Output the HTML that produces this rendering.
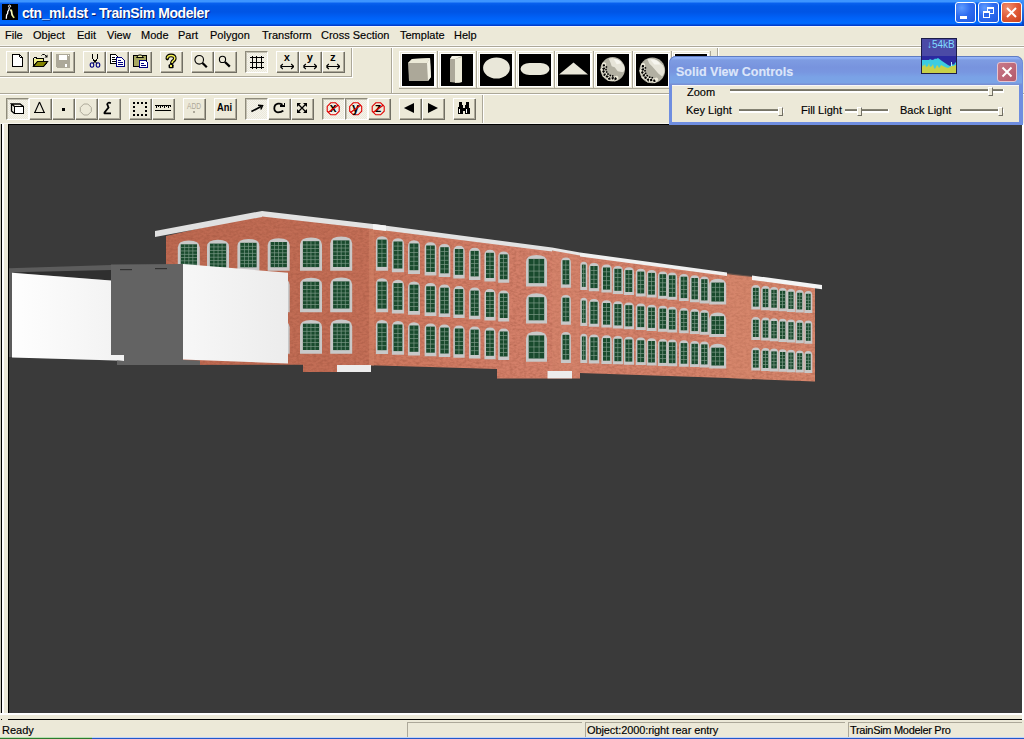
<!DOCTYPE html><html><head><meta charset="utf-8"><style>
*{margin:0;padding:0;box-sizing:border-box}
html,body{width:1024px;height:739px;overflow:hidden;background:#ece9d8;font-family:"Liberation Sans",sans-serif;font-size:11px;color:#000}
.a{position:absolute}
.t{position:absolute;white-space:pre;line-height:12px;-webkit-text-stroke-width:0.15px}
.btn{position:absolute;width:22px;height:21px;border-top:1px solid #fff;border-left:1px solid #fff;box-shadow:inset -1px -1px 0 #aca899, 1px 1px 0 #716f64;}
.btn svg{position:absolute;left:3px;top:2px}
.prs{position:absolute;width:23px;height:22px;border-top:1px solid #8e8b7c;border-left:1px solid #8e8b7c;box-shadow:inset 1px 1px 0 #c4c1b2;border-right:1px solid #fff;border-bottom:1px solid #fff;
 background-color:#f4f3ee;background-image:linear-gradient(45deg,#ece9d8 25%,transparent 25%,transparent 75%,#ece9d8 75%),linear-gradient(45deg,#ece9d8 25%,transparent 25%,transparent 75%,#ece9d8 75%);background-size:2px 2px;background-position:0 0,1px 1px}
.prs svg{position:absolute;left:3px;top:2px}
</style></head><body>
<div class="a" style="left:0;top:0;width:1024px;height:26px;background:linear-gradient(180deg,#3d95ff 0px,#3d95ff 2px,#0a62ef 3px,#0058e6 6px,#0055e5 12px,#0062f8 18px,#006bff 23px,#0066f5 24px,#003fcf 25px,#003dcb 26px)"></div>
<div class="a" style="left:2px;top:4px;width:16px;height:16px;background:#000"><svg width="16" height="16" style="position:absolute;left:0;top:0"><path d="M4.3 14.8 L4.6 11 L5.6 9.5 L5.8 7.5 L6.8 6 L7.3 3.6" stroke="#fff" stroke-width="1.3" fill="none"/><circle cx="7.6" cy="2.2" r="1.1" stroke="#fff" stroke-width="0.9" fill="none"/><path d="M8.6 5.5 L9.6 7 L10 10 L11 12.5 L12.3 13.8" stroke="#eeee88" stroke-width="1.6" fill="none"/><path d="M8.4 5.6 L9.3 8.5 L10.2 12" stroke="#fff" stroke-width="0.7" fill="none"/></svg></div>
<div class="t" style="left:23px;top:7px;font-weight:bold;font-size:14px;line-height:14px;letter-spacing:-0.42px;color:#0a1e6e;-webkit-text-stroke-width:0">ctn_ml.dst - TrainSim Modeler</div>
<div class="t" style="left:22px;top:6px;font-weight:bold;font-size:14px;line-height:14px;letter-spacing:-0.42px;color:#fff;-webkit-text-stroke-width:0">ctn_ml.dst - TrainSim Modeler</div>
<div class="a" style="left:955px;top:2px;width:21px;height:21px;border:1px solid #fff;border-radius:3px;background:radial-gradient(circle at 30% 25%,#5f9cff 0%,#2e6cf0 45%,#1f58e0 100%)"><div class="a" style="left:4px;top:13px;width:7px;height:3px;background:#fff"></div></div>
<div class="a" style="left:978px;top:2px;width:21px;height:21px;border:1px solid #fff;border-radius:3px;background:radial-gradient(circle at 30% 25%,#5f9cff 0%,#2e6cf0 45%,#1f58e0 100%)"><div class="a" style="left:8px;top:4px;width:7px;height:7px;border:1px solid #fff;border-top-width:2px"></div><div class="a" style="left:4px;top:8px;width:7px;height:7px;border:1px solid #fff;border-top-width:2px;background:#2a66ea"></div></div>
<div class="a" style="left:1001px;top:2px;width:21px;height:21px;border:1px solid #fff;border-radius:3px;background:radial-gradient(circle at 30% 25%,#f09070 0%,#e05a36 50%,#c8401c 100%)"><svg width="19" height="19" style="position:absolute;left:0;top:0"><path d="M5 5 L14 14 M14 5 L5 14" stroke="#fff" stroke-width="2"/></svg></div>
<div class="a" style="left:1022px;top:0;width:2px;height:26px;background:linear-gradient(180deg,#3d95ff,#0040c0)"></div>
<div class="a" style="left:0;top:26px;width:1024px;height:1px;background:#f4f6fb"></div>
<div class="t" style="left:5px;top:29px">File</div>
<div class="t" style="left:33px;top:29px">Object</div>
<div class="t" style="left:77px;top:29px">Edit</div>
<div class="t" style="left:107px;top:29px">View</div>
<div class="t" style="left:141px;top:29px">Mode</div>
<div class="t" style="left:178px;top:29px">Part</div>
<div class="t" style="left:210px;top:29px">Polygon</div>
<div class="t" style="left:262px;top:29px">Transform</div>
<div class="t" style="left:321px;top:29px">Cross Section</div>
<div class="t" style="left:400px;top:29px">Template</div>
<div class="t" style="left:454px;top:29px">Help</div>
<div class="a" style="left:0;top:45px;width:1024px;height:1px;background:#f7f6f0"></div>
<div class="a" style="left:0;top:46px;width:1024px;height:1px;background:#aca899"></div>
<div class="a" style="left:0;top:47px;width:1024px;height:1px;background:#fff"></div>
<div class="btn" style="left:6px;top:51px;width:22px;height:21px"><svg width="16" height="16" shape-rendering="crispEdges" style="overflow:visible"><path d="M2.5 0.5h7l3 3v9h-10z" fill="#fff" stroke="#000"/><rect x="9" y="1" width="1" height="2" fill="#000"/><rect x="10" y="3" width="2" height="1" fill="#000"/></svg></div>
<div class="btn" style="left:29px;top:51px;width:22px;height:21px"><svg width="16" height="16" shape-rendering="crispEdges" style="overflow:visible"><path d="M0.5 3.5h3v1h7v3" fill="none" stroke="#000"/><rect x="1" y="5" width="9" height="2" fill="#f0f088"/><rect x="1" y="7" width="4" height="4" fill="#f0f088"/><path d="M0.5 4v8.5h10l4-5h-10l-4 5" fill="none" stroke="#000"/><path d="M4.5 8h9.5l-3.5 4h-9.5z" fill="#848400"/><path d="M4.5 7.5h10l-4 5h-10z" fill="none" stroke="#000" shape-rendering="auto" stroke-width="1.2"/><path d="M8.5 1.5l1-1h2l1.5 1.5" fill="none" stroke="#000" shape-rendering="auto"/><path d="M11.5 3.5h3v-3z" fill="#000" shape-rendering="auto"/></svg></div>
<div class="btn" style="left:52px;top:51px;width:22px;height:21px"><svg width="16" height="16" shape-rendering="crispEdges" style="overflow:visible"><rect x="0" y="0" width="14" height="14" fill="#aca899"/><rect x="0" y="13" width="1" height="1" fill="#ece9d8"/><rect x="3" y="1" width="8" height="5" fill="#fff"/><rect x="12" y="1" width="1" height="1" fill="#fff"/><rect x="9" y="10" width="2" height="3" fill="#fff"/></svg></div>
<div class="btn" style="left:83px;top:51px;width:22px;height:21px"><svg width="16" height="16" shape-rendering="crispEdges" style="overflow:visible"><path d="M5.5 0v4l2.5 4l2.5-4v-4" fill="none" stroke="#000" stroke-width="1.1"/><path d="M8 7l-2 3M8 7l2 3" stroke="#000" stroke-width="1.1" shape-rendering="auto"/><ellipse cx="5" cy="11" rx="1.8" ry="2.2" fill="none" stroke="#000080" stroke-width="1.1" shape-rendering="auto"/><ellipse cx="11" cy="11" rx="1.8" ry="2.2" fill="none" stroke="#000080" stroke-width="1.1" shape-rendering="auto"/></svg></div>
<div class="btn" style="left:106px;top:51px;width:22px;height:21px"><svg width="16" height="16" shape-rendering="crispEdges" style="overflow:visible"><path d="M0.5 0.5h5l1.5 1.5v7.5h-6.5z" fill="#fff" stroke="#000"/><rect x="2" y="3" width="3" height="1" fill="#000"/><rect x="2" y="5" width="4" height="1" fill="#000"/><rect x="2" y="7" width="4" height="1" fill="#000"/><path d="M6.5 3.5h5l2.5 2.5v6.5h-7.5z" fill="#fff" stroke="#000080"/><rect x="8" y="6" width="3" height="1" fill="#000080"/><rect x="8" y="8" width="5" height="1" fill="#000080"/><rect x="8" y="10" width="5" height="1" fill="#000080"/></svg></div>
<div class="btn" style="left:129px;top:51px;width:22px;height:21px"><svg width="16" height="16" shape-rendering="crispEdges" style="overflow:visible"><rect x="0.5" y="1.5" width="13" height="11" fill="#a8a860" stroke="#000"/><path d="M3.5 3.5l2-2.5h3l2 2.5z" fill="#f0f0a0" stroke="#000" shape-rendering="auto"/><rect x="4" y="3" width="6" height="1" fill="#000"/><path d="M6.5 6.5h6l2 2v5h-8z" fill="#fff" stroke="#000080"/><rect x="8" y="9" width="3" height="1" fill="#000080"/><rect x="8" y="11" width="5" height="1" fill="#000080"/></svg></div>
<div class="btn" style="left:160px;top:51px;width:22px;height:21px"><svg width="16" height="16" shape-rendering="crispEdges" style="overflow:visible"><path d="M3.3 4.6 Q3.3 1.4 7 1.4 Q10.8 1.4 10.8 4.3 Q10.8 6.4 8.6 7.4 L7.8 9" fill="none" stroke="#000" stroke-width="3.6" stroke-linecap="round" shape-rendering="auto"/><rect x="4.6" y="10.2" width="5" height="4" rx="1" fill="#000" shape-rendering="auto"/><path d="M3.3 4.6 Q3.3 1.4 7 1.4 Q10.8 1.4 10.8 4.3 Q10.8 6.4 8.6 7.4 L7.8 9" fill="none" stroke="#f4f050" stroke-width="1.5" shape-rendering="auto"/><rect x="6" y="11.3" width="2.2" height="1.8" fill="#f4f050"/></svg></div>
<div class="btn" style="left:191px;top:51px;width:22px;height:21px"><svg width="16" height="16" shape-rendering="crispEdges" style="overflow:visible"><circle cx="4.2" cy="5.8" r="4.3" fill="none" stroke="#000" stroke-width="1.1" shape-rendering="auto"/><path d="M7.5 9 L11.8 13.2" stroke="#000" stroke-width="2.3" shape-rendering="auto"/></svg></div>
<div class="btn" style="left:214px;top:51px;width:22px;height:21px"><svg width="16" height="16" shape-rendering="crispEdges" style="overflow:visible"><circle cx="4.5" cy="5.4" r="3.1" fill="none" stroke="#000" stroke-width="1.1" shape-rendering="auto"/><path d="M7 8 L11.8 12.6" stroke="#000" stroke-width="2.3" shape-rendering="auto"/></svg></div>
<div class="prs" style="left:245px;top:51px;width:23px;height:22px"><svg width="16" height="16" shape-rendering="crispEdges" style="overflow:visible"><rect x="2.5" y="2" width="1.4" height="13" fill="#000"/><rect x="7" y="2" width="1.4" height="13" fill="#000"/><rect x="11.5" y="2" width="1.4" height="13" fill="#000"/><rect x="1" y="3" width="14" height="1.4" fill="#000"/><rect x="1" y="8" width="14" height="1.4" fill="#000"/><rect x="1" y="12.5" width="14" height="1.4" fill="#000"/></svg></div>
<div class="btn" style="left:276px;top:51px;width:22px;height:21px"><svg width="16" height="16" shape-rendering="crispEdges" style="overflow:visible"><text x="6.8" y="7" text-anchor="middle" font-family="Liberation Mono" font-weight="bold" font-size="10.5" fill="#000">x</text><path d="M0.5 12.5h13" stroke="#000" stroke-width="1.1"/><path d="M0.3 12.5l2.5-2.5M0.3 12.5l2.5 2.5M13.7 12.5l-2.5-2.5M13.7 12.5l-2.5 2.5" stroke="#000" stroke-width="1.1" shape-rendering="auto"/></svg></div>
<div class="btn" style="left:299px;top:51px;width:22px;height:21px"><svg width="16" height="16" shape-rendering="crispEdges" style="overflow:visible"><text x="6.8" y="7" text-anchor="middle" font-family="Liberation Mono" font-weight="bold" font-size="10.5" fill="#000">y</text><path d="M0.5 12.5h13" stroke="#000" stroke-width="1.1"/><path d="M0.3 12.5l2.5-2.5M0.3 12.5l2.5 2.5M13.7 12.5l-2.5-2.5M13.7 12.5l-2.5 2.5" stroke="#000" stroke-width="1.1" shape-rendering="auto"/></svg></div>
<div class="btn" style="left:322px;top:51px;width:22px;height:21px"><svg width="16" height="16" shape-rendering="crispEdges" style="overflow:visible"><text x="6.8" y="7" text-anchor="middle" font-family="Liberation Mono" font-weight="bold" font-size="10.5" fill="#000">z</text><path d="M0.5 12.5h13" stroke="#000" stroke-width="1.1"/><path d="M0.3 12.5l2.5-2.5M0.3 12.5l2.5 2.5M13.7 12.5l-2.5-2.5M13.7 12.5l-2.5 2.5" stroke="#000" stroke-width="1.1" shape-rendering="auto"/></svg></div>
<div class="a" style="left:351px;top:48px;width:1px;height:29px;background:#aca899"></div><div class="a" style="left:352px;top:48px;width:1px;height:30px;background:#fff"></div>
<div class="a" style="left:0;top:76px;width:352px;height:1px;background:#aca899"></div><div class="a" style="left:0;top:77px;width:352px;height:1px;background:#fff"></div>
<div class="a" style="left:391px;top:48px;width:1px;height:45px;background:#aca899"></div><div class="a" style="left:392px;top:48px;width:1px;height:45px;background:#fff"></div>
<div class="a" style="left:399px;top:51px;width:39px;height:38px;background:#fff;box-shadow:inset -1px -1px 0 #aca899, inset -2px -2px 0 #ece9d8"><div class="a" style="left:1px;top:1px;width:36px;height:35px;border:1px solid #ece9d8;border-right:none;border-bottom:none"></div><svg class="a" style="left:3px;top:3px" width="32" height="32"><rect width="32" height="32" fill="#000"/><path d="M6 9 L10 5 L28 4 L29 23 L26 27 L7 27 Z" fill="#aca899"/><path d="M6 9 L10 5 L28 4 L25 9 Z" fill="#ecead8"/><path d="M25 9 L28 4 L29 23 L26 27 Z" fill="#f4f2e4"/></svg></div>
<div class="a" style="left:438px;top:51px;width:39px;height:38px;background:#fff;box-shadow:inset -1px -1px 0 #aca899, inset -2px -2px 0 #ece9d8"><div class="a" style="left:1px;top:1px;width:36px;height:35px;border:1px solid #ece9d8;border-right:none;border-bottom:none"></div><svg class="a" style="left:3px;top:3px" width="32" height="32"><rect width="32" height="32" fill="#000"/><path d="M9 5 L11 2 L21 2 L21 28 L18 29 L9 28 Z" fill="#aca899"/><path d="M14 5 L21 3 L21 28 L14 29 Z" fill="#ecead8"/><path d="M9 5 L11 2 L21 2 L14 5Z" fill="#f4f2e4"/></svg></div>
<div class="a" style="left:477px;top:51px;width:39px;height:38px;background:#fff;box-shadow:inset -1px -1px 0 #aca899, inset -2px -2px 0 #ece9d8"><div class="a" style="left:1px;top:1px;width:36px;height:35px;border:1px solid #ece9d8;border-right:none;border-bottom:none"></div><svg class="a" style="left:3px;top:3px" width="32" height="32"><rect width="32" height="32" fill="#000"/><ellipse cx="16.5" cy="14" rx="13.4" ry="10.5" fill="#e9e7d9"/></svg></div>
<div class="a" style="left:516px;top:51px;width:39px;height:38px;background:#fff;box-shadow:inset -1px -1px 0 #aca899, inset -2px -2px 0 #ece9d8"><div class="a" style="left:1px;top:1px;width:36px;height:35px;border:1px solid #ece9d8;border-right:none;border-bottom:none"></div><svg class="a" style="left:3px;top:3px" width="32" height="32"><rect width="32" height="32" fill="#000"/><rect x="1.5" y="9" width="29" height="12" rx="9" ry="6" fill="#e9e7d9"/></svg></div>
<div class="a" style="left:555px;top:51px;width:39px;height:38px;background:#fff;box-shadow:inset -1px -1px 0 #aca899, inset -2px -2px 0 #ece9d8"><div class="a" style="left:1px;top:1px;width:36px;height:35px;border:1px solid #ece9d8;border-right:none;border-bottom:none"></div><svg class="a" style="left:3px;top:3px" width="32" height="32"><rect width="32" height="32" fill="#000"/><path d="M1 20.5 L15.5 8.5 L30 20.5 Z" fill="#e9e7d9"/></svg></div>
<div class="a" style="left:594px;top:51px;width:39px;height:38px;background:#fff;box-shadow:inset -1px -1px 0 #aca899, inset -2px -2px 0 #ece9d8"><div class="a" style="left:1px;top:1px;width:36px;height:35px;border:1px solid #ece9d8;border-right:none;border-bottom:none"></div><svg class="a" style="left:3px;top:3px" width="32" height="32"><rect width="32" height="32" fill="#000"/><circle cx="15.7" cy="15.3" r="12.2" fill="#b2b0a2"/><path d="M11.7 4.600000000000001 Q19.7 2.1000000000000014 26.9 11.3 Q28.9 16.3 25.9 18.3 L20.7 17.3 L17.7 13.3 L14.7 12.3 L13.7 9.3 Z" fill="#e6e4d8"/><path d="M16.7 5.100000000000001 Q22.7 5.100000000000001 24.7 9.3 L19.7 10.3Z" fill="#f6f5ee"/><path d="M7.0 10.3 L6.8 12.2 L7.0 14.1 L5.7 15.8 L6.6 17.6 L7.7 19.0 L7.6 21.2 L9.3 22.2 L11.0 22.8 L12.1 24.6 L14.1 24.6 L15.9 24.1 L17.8 25.1 L19.4 24.0" fill="none" stroke="#ece9d8" stroke-width="4.2" stroke-linecap="round"/><path d="M7.0 10.3 L6.8 12.2 L7.0 14.1 L5.7 15.8 L6.6 17.6 L7.7 19.0 L7.6 21.2 L9.3 22.2 L11.0 22.8 L12.1 24.6 L14.1 24.6 L15.9 24.1 L17.8 25.1 L19.4 24.0" fill="none" stroke="#000" stroke-width="2.2" stroke-dasharray="2.2 1.2"/><rect x="8.6" y="12.2" width="1.6" height="1.6" fill="#000"/><rect x="8.2" y="14.7" width="1.6" height="1.6" fill="#000"/><rect x="8.8" y="17.2" width="1.6" height="1.6" fill="#000"/><rect x="10.2" y="19.3" width="1.6" height="1.6" fill="#000"/><rect x="12.4" y="20.7" width="1.6" height="1.6" fill="#000"/><rect x="14.9" y="21.2" width="1.6" height="1.6" fill="#000"/></svg></div>
<div class="a" style="left:633px;top:51px;width:39px;height:38px;background:#fff;box-shadow:inset -1px -1px 0 #aca899, inset -2px -2px 0 #ece9d8"><div class="a" style="left:1px;top:1px;width:36px;height:35px;border:1px solid #ece9d8;border-right:none;border-bottom:none"></div><svg class="a" style="left:3px;top:3px" width="32" height="32"><rect width="32" height="32" fill="#000"/><circle cx="16.3" cy="16.4" r="12.8" fill="#b2b0a2"/><path d="M11.3 5.099999999999998 Q19.3 2.599999999999998 27.1 11.399999999999999 Q30.1 18.4 26.1 22.4 L22.3 19.4 L16.3 12.399999999999999 L13.3 9.399999999999999 Z" fill="#e6e4d8"/><path d="M14.3 5.599999999999998 Q21.3 4.599999999999998 24.3 10.399999999999999 L18.3 10.399999999999999Z" fill="#f6f5ee"/><path d="M7.1 11.1 L6.8 13.1 L7.0 15.1 L5.7 17.0 L6.6 18.8 L7.8 20.4 L7.7 22.6 L9.5 23.7 L11.3 24.4 L12.5 26.3 L14.6 26.2 L16.5 25.8 L18.5 26.8 L20.2 25.6" fill="none" stroke="#ece9d8" stroke-width="4.2" stroke-linecap="round"/><path d="M7.1 11.1 L6.8 13.1 L7.0 15.1 L5.7 17.0 L6.6 18.8 L7.8 20.4 L7.7 22.6 L9.5 23.7 L11.3 24.4 L12.5 26.3 L14.6 26.2 L16.5 25.8 L18.5 26.8 L20.2 25.6" fill="none" stroke="#000" stroke-width="2.2" stroke-dasharray="2.2 1.2"/><rect x="8.6" y="13.1" width="1.6" height="1.6" fill="#000"/><rect x="8.2" y="15.9" width="1.6" height="1.6" fill="#000"/><rect x="8.8" y="18.6" width="1.6" height="1.6" fill="#000"/><rect x="10.4" y="20.9" width="1.6" height="1.6" fill="#000"/><rect x="12.8" y="22.4" width="1.6" height="1.6" fill="#000"/><rect x="15.5" y="22.9" width="1.6" height="1.6" fill="#000"/></svg></div>
<div class="a" style="left:672px;top:51px;width:39px;height:38px;background:#fff;box-shadow:inset -1px -1px 0 #aca899, inset -2px -2px 0 #ece9d8"><div class="a" style="left:1px;top:1px;width:36px;height:35px;border:1px solid #ece9d8;border-right:none;border-bottom:none"></div><svg class="a" style="left:3px;top:3px" width="32" height="32"><rect width="32" height="32" fill="#000"/></svg></div>
<div class="a" style="left:717px;top:48px;width:1px;height:45px;background:#aca899"></div><div class="a" style="left:718px;top:48px;width:1px;height:45px;background:#fff"></div>
<div class="a" style="left:0;top:93px;width:1024px;height:1px;background:#aca899"></div><div class="a" style="left:0;top:94px;width:1024px;height:1px;background:#fff"></div>
<div class="prs" style="left:6px;top:98px;width:23px;height:22px"><svg width="16" height="16" shape-rendering="crispEdges" style="overflow:visible"><g transform="translate(0,1)"><rect x="4.5" y="4.5" width="9" height="7" fill="#fff" stroke="#000" stroke-width="1.3"/><path d="M4.5 4.5 L1.5 2 H10 L13.5 4.5 M1.5 2 V9 L4.5 11.5" fill="none" stroke="#000" stroke-width="1.3" shape-rendering="auto"/></g></svg></div>
<div class="btn" style="left:29px;top:98px;width:22px;height:21px"><svg width="16" height="16" shape-rendering="crispEdges" style="overflow:visible"><path d="M6.5 1 L1.8 11.5 M6.5 1 L11.2 11.5" fill="none" stroke="#000" stroke-width="1.1" shape-rendering="auto"/><rect x="1" y="11" width="11" height="1" fill="#000"/></svg></div>
<div class="btn" style="left:52px;top:98px;width:22px;height:21px"><svg width="16" height="16" shape-rendering="crispEdges" style="overflow:visible"><rect x="6" y="7" width="3" height="3" fill="#000"/></svg></div>
<div class="btn" style="left:75px;top:98px;width:22px;height:21px"><svg width="16" height="16" shape-rendering="crispEdges" style="overflow:visible"><path d="M4.5 2.5h4l3.5 3.5v4l-3.5 3.5h-4l-3.5-3.5v-4z" transform="translate(0.3,0.5)" fill="none" stroke="#aca899" shape-rendering="auto"/></svg></div>
<div class="btn" style="left:98px;top:98px;width:22px;height:21px"><svg width="16" height="16" shape-rendering="crispEdges" style="overflow:visible"><path d="M8.8 2.2 Q6 0.8 5.2 3.2 L6.5 6.5 L2.5 11.5 Q2 12.6 3.5 12.4 H9" fill="none" stroke="#000" stroke-width="1.8" shape-rendering="auto"/></svg></div>
<div class="btn" style="left:129px;top:98px;width:22px;height:21px"><svg width="16" height="16" shape-rendering="crispEdges" style="overflow:visible"><rect x="0" y="1" width="2" height="2" fill="#000"/><rect x="4" y="1" width="2" height="2" fill="#000"/><rect x="8" y="1" width="2" height="2" fill="#000"/><rect x="12" y="1" width="2" height="2" fill="#000"/><rect x="0" y="5" width="2" height="2" fill="#000"/><rect x="12" y="5" width="2" height="2" fill="#000"/><rect x="0" y="9" width="2" height="2" fill="#000"/><rect x="12" y="9" width="2" height="2" fill="#000"/><rect x="0" y="13" width="2" height="2" fill="#000"/><rect x="4" y="13" width="2" height="2" fill="#000"/><rect x="8" y="13" width="2" height="2" fill="#000"/><rect x="12" y="13" width="2" height="2" fill="#000"/></svg></div>
<div class="btn" style="left:152px;top:98px;width:22px;height:21px"><svg width="16" height="16" shape-rendering="crispEdges" style="overflow:visible"><rect x="-1" y="4" width="16" height="1.2" fill="#000"/><rect x="0" y="5" width="1" height="2" fill="#000"/><rect x="2" y="5" width="1" height="1" fill="#000"/><rect x="4" y="5" width="1" height="2" fill="#000"/><rect x="6" y="5" width="1" height="1" fill="#000"/><rect x="8" y="5" width="1" height="2" fill="#000"/><rect x="10" y="5" width="1" height="1" fill="#000"/><rect x="12" y="5" width="1" height="2" fill="#000"/><rect x="14" y="5" width="1" height="1" fill="#000"/><rect x="-1" y="9" width="16" height="1.2" fill="#000"/></svg></div>
<div class="btn" style="left:183px;top:98px;width:22px;height:21px"><svg width="16" height="16" shape-rendering="crispEdges" style="overflow:visible"><text x="7" y="7.6" text-anchor="middle" font-family="Liberation Sans" font-size="8.2" fill="#aca899" textLength="14" lengthAdjust="spacingAndGlyphs">ADD</text><rect x="6" y="10" width="2" height="2" fill="#aca899"/></svg></div>
<div class="btn" style="left:214px;top:98px;width:22px;height:21px"><svg width="16" height="16" shape-rendering="crispEdges" style="overflow:visible"><text x="6.5" y="9.8" text-anchor="middle" font-family="Liberation Sans" font-weight="bold" font-size="10" fill="#000" textLength="15" lengthAdjust="spacingAndGlyphs">Ani</text></svg></div>
<div class="prs" style="left:245px;top:98px;width:23px;height:22px"><svg width="16" height="16" shape-rendering="crispEdges" style="overflow:visible"><path d="M2.4 10.6 L12.5 5.2" stroke="#000" stroke-width="1.7" shape-rendering="auto"/><path d="M9 4.2 L13.6 4.6 L11.8 8.5" fill="none" stroke="#000" stroke-width="1.4" shape-rendering="auto"/></svg></div>
<div class="btn" style="left:268px;top:98px;width:22px;height:21px"><svg width="16" height="16" shape-rendering="crispEdges" style="overflow:visible"><path d="M10.5 3.8 Q8.5 2.3 6 2.7 Q2.3 3.4 2.3 7.5 Q2.5 11 6 11.3 Q9.3 11.3 11.3 9.6" fill="none" stroke="#000" stroke-width="1.8" shape-rendering="auto"/><path d="M8.3 5.2 H12.3 V1.8" fill="none" stroke="#000" stroke-width="1.5"/></svg></div>
<div class="btn" style="left:291px;top:98px;width:22px;height:21px"><svg width="16" height="16" shape-rendering="crispEdges" style="overflow:visible"><path d="M3.5 3.5 L10.5 10.5 M10.5 3.5 L3.5 10.5" stroke="#000" stroke-width="1.3" shape-rendering="auto"/><path d="M2 2h4l-4 4z M12 2h-4l4 4z M2 12h4l-4-4z M12 12h-4l4-4z" fill="#000" shape-rendering="auto"/></svg></div>
<div class="prs" style="left:322px;top:98px;width:23px;height:22px"><svg width="16" height="16" shape-rendering="crispEdges" style="overflow:visible"><g transform="translate(0,0)"><path d="M4.8 1.8h4.8l3.6 3.6v4.8l-3.6 3.6h-4.8l-3.6-3.6v-4.8z" fill="none" stroke="#e00000" stroke-width="1.1" shape-rendering="auto"/><text x="7.2" y="11" text-anchor="middle" font-family="Liberation Mono" font-weight="bold" font-size="12" fill="#000">x</text><path d="M2 11.5 L12.5 4" stroke="#e00000" stroke-width="1.4" shape-rendering="auto"/></g></svg></div>
<div class="prs" style="left:345px;top:98px;width:23px;height:22px"><svg width="16" height="16" shape-rendering="crispEdges" style="overflow:visible"><g transform="translate(-0.5,0)"><path d="M4.8 1.8h4.8l3.6 3.6v4.8l-3.6 3.6h-4.8l-3.6-3.6v-4.8z" fill="none" stroke="#e00000" stroke-width="1.1" shape-rendering="auto"/><text x="7.2" y="11" text-anchor="middle" font-family="Liberation Mono" font-weight="bold" font-size="12" fill="#000">y</text><path d="M2 11.5 L12.5 4" stroke="#e00000" stroke-width="1.4" shape-rendering="auto"/></g></svg></div>
<div class="btn" style="left:368px;top:98px;width:22px;height:21px"><svg width="16" height="16" shape-rendering="crispEdges" style="overflow:visible"><g transform="translate(-1,0)"><path d="M4.8 1.8h4.8l3.6 3.6v4.8l-3.6 3.6h-4.8l-3.6-3.6v-4.8z" fill="none" stroke="#e00000" stroke-width="1.1" shape-rendering="auto"/><text x="7.2" y="11" text-anchor="middle" font-family="Liberation Mono" font-weight="bold" font-size="12" fill="#000">z</text><path d="M2 11.5 L12.5 4" stroke="#e00000" stroke-width="1.4" shape-rendering="auto"/></g></svg></div>
<div class="btn" style="left:399px;top:98px;width:22px;height:21px"><svg width="16" height="16" shape-rendering="crispEdges" style="overflow:visible"><path d="M0.9 7 L11 1.9 V12 Z" fill="#000" shape-rendering="auto"/></svg></div>
<div class="btn" style="left:422px;top:98px;width:22px;height:21px"><svg width="16" height="16" shape-rendering="crispEdges" style="overflow:visible"><path d="M12 7 L2 1.9 V12 Z" fill="#000" shape-rendering="auto"/></svg></div>
<div class="btn" style="left:453px;top:98px;width:22px;height:21px"><svg width="16" height="16" shape-rendering="crispEdges" style="overflow:visible"><path d="M2 1h3v3h1v3h1.5v-3h1v-3h3v4l1 2v5.5h-5v-3h-1.5v3h-5v-5.5l1-2z" fill="#000"/><rect x="1.5" y="8" width="1" height="3.5" fill="#fff"/><rect x="9" y="8" width="1" height="3.5" fill="#fff"/></svg></div>
<div class="a" style="left:482px;top:95px;width:1px;height:29px;background:#aca899"></div><div class="a" style="left:483px;top:95px;width:1px;height:29px;background:#fff"></div>
<div class="a" style="left:0;top:123px;width:1024px;height:1px;background:#f6f5ee"></div>
<div class="a" style="left:0;top:124px;width:1px;height:589px;background:#c8c6b8"></div>
<div class="a" style="left:1px;top:124px;width:1px;height:589px;background:#000"></div>
<div class="a" style="left:2px;top:124px;width:2px;height:589px;background:#fff"></div>
<div class="a" style="left:8px;top:124px;width:1014px;height:589px;background:#000"></div>
<div class="a" style="left:9px;top:125px;width:1013px;height:588px;background:#3a3a3a"></div>
<div class="a" style="left:1022px;top:124px;width:2px;height:596px;background:#fff"></div>
<div class="a" style="left:0;top:713px;width:1024px;height:2px;background:#fff"></div>
<div class="a" style="left:8px;top:719px;width:1014px;height:1px;background:#000"></div>
<div class="a" style="left:1px;top:719px;width:1px;height:1px;background:#000"></div>
<svg class="a" style="left:0;top:0" width="1024" height="739"><defs><filter id="brk" x="0" y="0" width="100%" height="100%" color-interpolation-filters="sRGB"><feTurbulence type="fractalNoise" baseFrequency="0.3 0.45" numOctaves="2" seed="11"/><feColorMatrix type="matrix" values="0 0 0 0 0.55  0 0 0 0 0.28  0 0 0 0 0.2  0.7 0 0 0 -0.25"/><feComposite in2="SourceGraphic" operator="in"/></filter><linearGradient id="bg1" gradientUnits="userSpaceOnUse" x1="166" y1="0" x2="815" y2="0"><stop offset="0" stop-color="#bd6951"/><stop offset="0.31" stop-color="#c46f57"/><stop offset="0.32" stop-color="#cd785e"/><stop offset="0.55" stop-color="#d4806a"/><stop offset="1" stop-color="#d6866c"/></linearGradient></defs><polygon points="166,236 262,214 373,227 580,254 733,275 752,277 815,286 815,381.5 735,378.3 580,373 580,378.4 497,378.4 497,369 371,365.2 371,372 303,372 303,364.7 166,365" fill="url(#bg1)"/><polygon points="166,236 262,214 373,227 580,254 733,275 752,277 815,286 815,381.5 735,378.3 580,373 580,378.4 497,378.4 497,369 371,365.2 371,372 303,372 303,364.7 166,365" fill="#000" filter="url(#brk)"/><polygon points="497,369 515,255 515,378.4 497,378.4" fill="#000" opacity="0"/><polygon points="369,226 374,227 374,366 369,366" fill="#d88a6e" opacity="0.35"/><polygon points="552,250 579,253 579,378 552,378" fill="#d88a6e" opacity="0.25"/><polygon points="727,273 752,276 752,380 727,378" fill="#d88a6e" opacity="0.3"/><path d="M177.8 270.8 L177.8 247.5 Q177.8 240.5 188.8 240.5 Q199.8 240.5 199.8 247.5 L199.8 270.8Z" fill="#c8c8c8"/><rect x="180.7" y="244.3" width="16.3" height="23.1" fill="#194a2d"/><rect x="184.4" y="244.3" width="0.7" height="23.1" fill="#7a9886"/><rect x="188.5" y="244.3" width="0.7" height="23.1" fill="#7a9886"/><rect x="192.5" y="244.3" width="0.7" height="23.1" fill="#7a9886"/><rect x="180.7" y="247.3" width="16.3" height="0.7" fill="#7a9886"/><rect x="180.7" y="250.6" width="16.3" height="0.7" fill="#7a9886"/><rect x="180.7" y="253.9" width="16.3" height="0.7" fill="#7a9886"/><rect x="180.7" y="257.2" width="16.3" height="0.7" fill="#7a9886"/><rect x="180.7" y="260.5" width="16.3" height="0.7" fill="#7a9886"/><rect x="180.7" y="263.8" width="16.3" height="0.7" fill="#7a9886"/><path d="M177.8 312.3 L177.8 286.0 Q177.8 279.0 188.8 279.0 Q199.8 279.0 199.8 286.0 L199.8 312.3Z" fill="#c8c8c8"/><rect x="180.7" y="282.9" width="16.3" height="25.8" fill="#194a2d"/><rect x="184.4" y="282.9" width="0.7" height="25.8" fill="#7a9886"/><rect x="188.5" y="282.9" width="0.7" height="25.8" fill="#7a9886"/><rect x="192.5" y="282.9" width="0.7" height="25.8" fill="#7a9886"/><rect x="180.7" y="286.2" width="16.3" height="0.7" fill="#7a9886"/><rect x="180.7" y="289.9" width="16.3" height="0.7" fill="#7a9886"/><rect x="180.7" y="293.6" width="16.3" height="0.7" fill="#7a9886"/><rect x="180.7" y="297.2" width="16.3" height="0.7" fill="#7a9886"/><rect x="180.7" y="300.9" width="16.3" height="0.7" fill="#7a9886"/><rect x="180.7" y="304.6" width="16.3" height="0.7" fill="#7a9886"/><path d="M177.8 353.8 L177.8 328.0 Q177.8 321.0 188.8 321.0 Q199.8 321.0 199.8 328.0 L199.8 353.8Z" fill="#c8c8c8"/><rect x="180.7" y="324.9" width="16.3" height="25.3" fill="#194a2d"/><rect x="184.4" y="324.9" width="0.7" height="25.3" fill="#7a9886"/><rect x="188.5" y="324.9" width="0.7" height="25.3" fill="#7a9886"/><rect x="192.5" y="324.9" width="0.7" height="25.3" fill="#7a9886"/><rect x="180.7" y="328.1" width="16.3" height="0.7" fill="#7a9886"/><rect x="180.7" y="331.7" width="16.3" height="0.7" fill="#7a9886"/><rect x="180.7" y="335.4" width="16.3" height="0.7" fill="#7a9886"/><rect x="180.7" y="339.0" width="16.3" height="0.7" fill="#7a9886"/><rect x="180.7" y="342.6" width="16.3" height="0.7" fill="#7a9886"/><rect x="180.7" y="346.2" width="16.3" height="0.7" fill="#7a9886"/><path d="M207.0 270.8 L207.0 246.7 Q207.0 239.7 218.0 239.7 Q229.0 239.7 229.0 246.7 L229.0 270.8Z" fill="#c8c8c8"/><rect x="209.9" y="243.6" width="16.3" height="23.8" fill="#194a2d"/><rect x="213.6" y="243.6" width="0.7" height="23.8" fill="#7a9886"/><rect x="217.7" y="243.6" width="0.7" height="23.8" fill="#7a9886"/><rect x="221.7" y="243.6" width="0.7" height="23.8" fill="#7a9886"/><rect x="209.9" y="246.6" width="16.3" height="0.7" fill="#7a9886"/><rect x="209.9" y="250.0" width="16.3" height="0.7" fill="#7a9886"/><rect x="209.9" y="253.4" width="16.3" height="0.7" fill="#7a9886"/><rect x="209.9" y="256.8" width="16.3" height="0.7" fill="#7a9886"/><rect x="209.9" y="260.2" width="16.3" height="0.7" fill="#7a9886"/><rect x="209.9" y="263.6" width="16.3" height="0.7" fill="#7a9886"/><path d="M207.0 312.3 L207.0 285.7 Q207.0 278.7 218.0 278.7 Q229.0 278.7 229.0 285.7 L229.0 312.3Z" fill="#c8c8c8"/><rect x="209.9" y="282.6" width="16.3" height="26.1" fill="#194a2d"/><rect x="213.6" y="282.6" width="0.7" height="26.1" fill="#7a9886"/><rect x="217.7" y="282.6" width="0.7" height="26.1" fill="#7a9886"/><rect x="221.7" y="282.6" width="0.7" height="26.1" fill="#7a9886"/><rect x="209.9" y="285.9" width="16.3" height="0.7" fill="#7a9886"/><rect x="209.9" y="289.6" width="16.3" height="0.7" fill="#7a9886"/><rect x="209.9" y="293.4" width="16.3" height="0.7" fill="#7a9886"/><rect x="209.9" y="297.1" width="16.3" height="0.7" fill="#7a9886"/><rect x="209.9" y="300.8" width="16.3" height="0.7" fill="#7a9886"/><rect x="209.9" y="304.5" width="16.3" height="0.7" fill="#7a9886"/><path d="M207.0 353.8 L207.0 327.7 Q207.0 320.7 218.0 320.7 Q229.0 320.7 229.0 327.7 L229.0 353.8Z" fill="#c8c8c8"/><rect x="209.9" y="324.6" width="16.3" height="25.6" fill="#194a2d"/><rect x="213.6" y="324.6" width="0.7" height="25.6" fill="#7a9886"/><rect x="217.7" y="324.6" width="0.7" height="25.6" fill="#7a9886"/><rect x="221.7" y="324.6" width="0.7" height="25.6" fill="#7a9886"/><rect x="209.9" y="327.9" width="16.3" height="0.7" fill="#7a9886"/><rect x="209.9" y="331.5" width="16.3" height="0.7" fill="#7a9886"/><rect x="209.9" y="335.2" width="16.3" height="0.7" fill="#7a9886"/><rect x="209.9" y="338.8" width="16.3" height="0.7" fill="#7a9886"/><rect x="209.9" y="342.5" width="16.3" height="0.7" fill="#7a9886"/><rect x="209.9" y="346.2" width="16.3" height="0.7" fill="#7a9886"/><path d="M237.4 270.8 L237.4 245.9 Q237.4 238.9 248.4 238.9 Q259.4 238.9 259.4 245.9 L259.4 270.8Z" fill="#c8c8c8"/><rect x="240.3" y="242.8" width="16.3" height="24.5" fill="#194a2d"/><rect x="244.0" y="242.8" width="0.7" height="24.5" fill="#7a9886"/><rect x="248.0" y="242.8" width="0.7" height="24.5" fill="#7a9886"/><rect x="252.1" y="242.8" width="0.7" height="24.5" fill="#7a9886"/><rect x="240.3" y="245.9" width="16.3" height="0.7" fill="#7a9886"/><rect x="240.3" y="249.4" width="16.3" height="0.7" fill="#7a9886"/><rect x="240.3" y="252.9" width="16.3" height="0.7" fill="#7a9886"/><rect x="240.3" y="256.4" width="16.3" height="0.7" fill="#7a9886"/><rect x="240.3" y="259.9" width="16.3" height="0.7" fill="#7a9886"/><rect x="240.3" y="263.4" width="16.3" height="0.7" fill="#7a9886"/><path d="M237.4 312.3 L237.4 285.4 Q237.4 278.4 248.4 278.4 Q259.4 278.4 259.4 285.4 L259.4 312.3Z" fill="#c8c8c8"/><rect x="240.3" y="282.2" width="16.3" height="26.3" fill="#194a2d"/><rect x="244.0" y="282.2" width="0.7" height="26.3" fill="#7a9886"/><rect x="248.0" y="282.2" width="0.7" height="26.3" fill="#7a9886"/><rect x="252.1" y="282.2" width="0.7" height="26.3" fill="#7a9886"/><rect x="240.3" y="285.7" width="16.3" height="0.7" fill="#7a9886"/><rect x="240.3" y="289.4" width="16.3" height="0.7" fill="#7a9886"/><rect x="240.3" y="293.2" width="16.3" height="0.7" fill="#7a9886"/><rect x="240.3" y="296.9" width="16.3" height="0.7" fill="#7a9886"/><rect x="240.3" y="300.7" width="16.3" height="0.7" fill="#7a9886"/><rect x="240.3" y="304.5" width="16.3" height="0.7" fill="#7a9886"/><path d="M237.4 353.8 L237.4 327.4 Q237.4 320.4 248.4 320.4 Q259.4 320.4 259.4 327.4 L259.4 353.8Z" fill="#c8c8c8"/><rect x="240.3" y="324.3" width="16.3" height="25.8" fill="#194a2d"/><rect x="244.0" y="324.3" width="0.7" height="25.8" fill="#7a9886"/><rect x="248.0" y="324.3" width="0.7" height="25.8" fill="#7a9886"/><rect x="252.1" y="324.3" width="0.7" height="25.8" fill="#7a9886"/><rect x="240.3" y="327.6" width="16.3" height="0.7" fill="#7a9886"/><rect x="240.3" y="331.3" width="16.3" height="0.7" fill="#7a9886"/><rect x="240.3" y="335.0" width="16.3" height="0.7" fill="#7a9886"/><rect x="240.3" y="338.7" width="16.3" height="0.7" fill="#7a9886"/><rect x="240.3" y="342.4" width="16.3" height="0.7" fill="#7a9886"/><rect x="240.3" y="346.1" width="16.3" height="0.7" fill="#7a9886"/><path d="M267.7 270.8 L267.7 245.2 Q267.7 238.2 278.7 238.2 Q289.7 238.2 289.7 245.2 L289.7 270.8Z" fill="#c8c8c8"/><rect x="270.6" y="242.0" width="16.3" height="25.2" fill="#194a2d"/><rect x="274.3" y="242.0" width="0.7" height="25.2" fill="#7a9886"/><rect x="278.3" y="242.0" width="0.7" height="25.2" fill="#7a9886"/><rect x="282.4" y="242.0" width="0.7" height="25.2" fill="#7a9886"/><rect x="270.6" y="245.3" width="16.3" height="0.7" fill="#7a9886"/><rect x="270.6" y="248.9" width="16.3" height="0.7" fill="#7a9886"/><rect x="270.6" y="252.5" width="16.3" height="0.7" fill="#7a9886"/><rect x="270.6" y="256.1" width="16.3" height="0.7" fill="#7a9886"/><rect x="270.6" y="259.7" width="16.3" height="0.7" fill="#7a9886"/><rect x="270.6" y="263.3" width="16.3" height="0.7" fill="#7a9886"/><path d="M267.7 312.3 L267.7 285.1 Q267.7 278.1 278.7 278.1 Q289.7 278.1 289.7 285.1 L289.7 312.3Z" fill="#c8c8c8"/><rect x="270.6" y="282.0" width="16.3" height="26.6" fill="#194a2d"/><rect x="274.3" y="282.0" width="0.7" height="26.6" fill="#7a9886"/><rect x="278.3" y="282.0" width="0.7" height="26.6" fill="#7a9886"/><rect x="282.4" y="282.0" width="0.7" height="26.6" fill="#7a9886"/><rect x="270.6" y="285.4" width="16.3" height="0.7" fill="#7a9886"/><rect x="270.6" y="289.2" width="16.3" height="0.7" fill="#7a9886"/><rect x="270.6" y="293.0" width="16.3" height="0.7" fill="#7a9886"/><rect x="270.6" y="296.8" width="16.3" height="0.7" fill="#7a9886"/><rect x="270.6" y="300.6" width="16.3" height="0.7" fill="#7a9886"/><rect x="270.6" y="304.4" width="16.3" height="0.7" fill="#7a9886"/><path d="M267.7 353.8 L267.7 327.2 Q267.7 320.2 278.7 320.2 Q289.7 320.2 289.7 327.2 L289.7 353.8Z" fill="#c8c8c8"/><rect x="270.6" y="324.0" width="16.3" height="26.1" fill="#194a2d"/><rect x="274.3" y="324.0" width="0.7" height="26.1" fill="#7a9886"/><rect x="278.3" y="324.0" width="0.7" height="26.1" fill="#7a9886"/><rect x="282.4" y="324.0" width="0.7" height="26.1" fill="#7a9886"/><rect x="270.6" y="327.4" width="16.3" height="0.7" fill="#7a9886"/><rect x="270.6" y="331.1" width="16.3" height="0.7" fill="#7a9886"/><rect x="270.6" y="334.8" width="16.3" height="0.7" fill="#7a9886"/><rect x="270.6" y="338.6" width="16.3" height="0.7" fill="#7a9886"/><rect x="270.6" y="342.3" width="16.3" height="0.7" fill="#7a9886"/><rect x="270.6" y="346.0" width="16.3" height="0.7" fill="#7a9886"/><path d="M300.0 270.8 L300.0 244.4 Q300.0 237.4 311.0 237.4 Q322.0 237.4 322.0 244.4 L322.0 270.8Z" fill="#c8c8c8"/><rect x="302.9" y="241.2" width="16.3" height="25.9" fill="#194a2d"/><rect x="306.6" y="241.2" width="0.7" height="25.9" fill="#7a9886"/><rect x="310.6" y="241.2" width="0.7" height="25.9" fill="#7a9886"/><rect x="314.7" y="241.2" width="0.7" height="25.9" fill="#7a9886"/><rect x="302.9" y="244.6" width="16.3" height="0.7" fill="#7a9886"/><rect x="302.9" y="248.3" width="16.3" height="0.7" fill="#7a9886"/><rect x="302.9" y="252.0" width="16.3" height="0.7" fill="#7a9886"/><rect x="302.9" y="255.7" width="16.3" height="0.7" fill="#7a9886"/><rect x="302.9" y="259.4" width="16.3" height="0.7" fill="#7a9886"/><rect x="302.9" y="263.1" width="16.3" height="0.7" fill="#7a9886"/><path d="M300.0 312.3 L300.0 284.8 Q300.0 277.8 311.0 277.8 Q322.0 277.8 322.0 284.8 L322.0 312.3Z" fill="#c8c8c8"/><rect x="302.9" y="281.7" width="16.3" height="26.9" fill="#194a2d"/><rect x="306.6" y="281.7" width="0.7" height="26.9" fill="#7a9886"/><rect x="310.6" y="281.7" width="0.7" height="26.9" fill="#7a9886"/><rect x="314.7" y="281.7" width="0.7" height="26.9" fill="#7a9886"/><rect x="302.9" y="285.1" width="16.3" height="0.7" fill="#7a9886"/><rect x="302.9" y="289.0" width="16.3" height="0.7" fill="#7a9886"/><rect x="302.9" y="292.8" width="16.3" height="0.7" fill="#7a9886"/><rect x="302.9" y="296.6" width="16.3" height="0.7" fill="#7a9886"/><rect x="302.9" y="300.5" width="16.3" height="0.7" fill="#7a9886"/><rect x="302.9" y="304.3" width="16.3" height="0.7" fill="#7a9886"/><path d="M300.0 353.8 L300.0 326.9 Q300.0 319.9 311.0 319.9 Q322.0 319.9 322.0 326.9 L322.0 353.8Z" fill="#c8c8c8"/><rect x="302.9" y="323.7" width="16.3" height="26.3" fill="#194a2d"/><rect x="306.6" y="323.7" width="0.7" height="26.3" fill="#7a9886"/><rect x="310.6" y="323.7" width="0.7" height="26.3" fill="#7a9886"/><rect x="314.7" y="323.7" width="0.7" height="26.3" fill="#7a9886"/><rect x="302.9" y="327.1" width="16.3" height="0.7" fill="#7a9886"/><rect x="302.9" y="330.9" width="16.3" height="0.7" fill="#7a9886"/><rect x="302.9" y="334.7" width="16.3" height="0.7" fill="#7a9886"/><rect x="302.9" y="338.4" width="16.3" height="0.7" fill="#7a9886"/><rect x="302.9" y="342.2" width="16.3" height="0.7" fill="#7a9886"/><rect x="302.9" y="346.0" width="16.3" height="0.7" fill="#7a9886"/><path d="M330.2 270.8 L330.2 243.6 Q330.2 236.6 341.2 236.6 Q352.2 236.6 352.2 243.6 L352.2 270.8Z" fill="#c8c8c8"/><rect x="333.1" y="240.4" width="16.3" height="26.6" fill="#194a2d"/><rect x="336.8" y="240.4" width="0.7" height="26.6" fill="#7a9886"/><rect x="340.8" y="240.4" width="0.7" height="26.6" fill="#7a9886"/><rect x="344.9" y="240.4" width="0.7" height="26.6" fill="#7a9886"/><rect x="333.1" y="243.9" width="16.3" height="0.7" fill="#7a9886"/><rect x="333.1" y="247.7" width="16.3" height="0.7" fill="#7a9886"/><rect x="333.1" y="251.5" width="16.3" height="0.7" fill="#7a9886"/><rect x="333.1" y="255.3" width="16.3" height="0.7" fill="#7a9886"/><rect x="333.1" y="259.1" width="16.3" height="0.7" fill="#7a9886"/><rect x="333.1" y="262.9" width="16.3" height="0.7" fill="#7a9886"/><path d="M330.2 312.3 L330.2 284.5 Q330.2 277.5 341.2 277.5 Q352.2 277.5 352.2 284.5 L352.2 312.3Z" fill="#c8c8c8"/><rect x="333.1" y="281.4" width="16.3" height="27.1" fill="#194a2d"/><rect x="336.8" y="281.4" width="0.7" height="27.1" fill="#7a9886"/><rect x="340.8" y="281.4" width="0.7" height="27.1" fill="#7a9886"/><rect x="344.9" y="281.4" width="0.7" height="27.1" fill="#7a9886"/><rect x="333.1" y="284.9" width="16.3" height="0.7" fill="#7a9886"/><rect x="333.1" y="288.7" width="16.3" height="0.7" fill="#7a9886"/><rect x="333.1" y="292.6" width="16.3" height="0.7" fill="#7a9886"/><rect x="333.1" y="296.5" width="16.3" height="0.7" fill="#7a9886"/><rect x="333.1" y="300.4" width="16.3" height="0.7" fill="#7a9886"/><rect x="333.1" y="304.2" width="16.3" height="0.7" fill="#7a9886"/><path d="M330.2 353.8 L330.2 326.6 Q330.2 319.6 341.2 319.6 Q352.2 319.6 352.2 326.6 L352.2 353.8Z" fill="#c8c8c8"/><rect x="333.1" y="323.5" width="16.3" height="26.6" fill="#194a2d"/><rect x="336.8" y="323.5" width="0.7" height="26.6" fill="#7a9886"/><rect x="340.8" y="323.5" width="0.7" height="26.6" fill="#7a9886"/><rect x="344.9" y="323.5" width="0.7" height="26.6" fill="#7a9886"/><rect x="333.1" y="326.9" width="16.3" height="0.7" fill="#7a9886"/><rect x="333.1" y="330.7" width="16.3" height="0.7" fill="#7a9886"/><rect x="333.1" y="334.5" width="16.3" height="0.7" fill="#7a9886"/><rect x="333.1" y="338.3" width="16.3" height="0.7" fill="#7a9886"/><rect x="333.1" y="342.1" width="16.3" height="0.7" fill="#7a9886"/><rect x="333.1" y="345.9" width="16.3" height="0.7" fill="#7a9886"/><path d="M375.9 270.7 L375.9 242.3 Q375.9 236.2 382.0 236.2 Q388.1 236.2 388.1 242.3 L388.1 270.7Z" fill="#c8c8c8"/><rect x="377.5" y="239.6" width="9.1" height="27.3" fill="#194a2d"/><rect x="381.6" y="239.6" width="0.7" height="27.3" fill="#7a9886"/><rect x="377.5" y="243.8" width="9.1" height="0.7" fill="#7a9886"/><rect x="377.5" y="248.3" width="9.1" height="0.7" fill="#7a9886"/><rect x="377.5" y="252.9" width="9.1" height="0.7" fill="#7a9886"/><rect x="377.5" y="257.4" width="9.1" height="0.7" fill="#7a9886"/><rect x="377.5" y="262.0" width="9.1" height="0.7" fill="#7a9886"/><path d="M375.9 312.3 L375.9 284.3 Q375.9 278.2 382.0 278.2 Q388.1 278.2 388.1 284.3 L388.1 312.3Z" fill="#c8c8c8"/><rect x="377.5" y="281.6" width="9.1" height="27.0" fill="#194a2d"/><rect x="381.6" y="281.6" width="0.7" height="27.0" fill="#7a9886"/><rect x="377.5" y="285.7" width="9.1" height="0.7" fill="#7a9886"/><rect x="377.5" y="290.2" width="9.1" height="0.7" fill="#7a9886"/><rect x="377.5" y="294.7" width="9.1" height="0.7" fill="#7a9886"/><rect x="377.5" y="299.2" width="9.1" height="0.7" fill="#7a9886"/><rect x="377.5" y="303.7" width="9.1" height="0.7" fill="#7a9886"/><path d="M375.9 353.9 L375.9 326.1 Q375.9 320.0 382.0 320.0 Q388.1 320.0 388.1 326.1 L388.1 353.9Z" fill="#c8c8c8"/><rect x="377.5" y="323.4" width="9.1" height="26.8" fill="#194a2d"/><rect x="381.6" y="323.4" width="0.7" height="26.8" fill="#7a9886"/><rect x="377.5" y="327.5" width="9.1" height="0.7" fill="#7a9886"/><rect x="377.5" y="332.0" width="9.1" height="0.7" fill="#7a9886"/><rect x="377.5" y="336.4" width="9.1" height="0.7" fill="#7a9886"/><rect x="377.5" y="340.9" width="9.1" height="0.7" fill="#7a9886"/><rect x="377.5" y="345.4" width="9.1" height="0.7" fill="#7a9886"/><path d="M391.9 272.3 L391.9 244.3 Q391.9 238.2 398.0 238.2 Q404.1 238.2 404.1 244.3 L404.1 272.3Z" fill="#c8c8c8"/><rect x="393.5" y="241.5" width="8.9" height="27.0" fill="#194a2d"/><rect x="397.6" y="241.5" width="0.7" height="27.0" fill="#7a9886"/><rect x="393.5" y="245.7" width="8.9" height="0.7" fill="#7a9886"/><rect x="393.5" y="250.2" width="8.9" height="0.7" fill="#7a9886"/><rect x="393.5" y="254.7" width="8.9" height="0.7" fill="#7a9886"/><rect x="393.5" y="259.2" width="8.9" height="0.7" fill="#7a9886"/><rect x="393.5" y="263.7" width="8.9" height="0.7" fill="#7a9886"/><path d="M391.9 313.5 L391.9 285.9 Q391.9 279.8 398.0 279.8 Q404.1 279.8 404.1 285.9 L404.1 313.5Z" fill="#c8c8c8"/><rect x="393.5" y="283.1" width="8.9" height="26.7" fill="#194a2d"/><rect x="397.6" y="283.1" width="0.7" height="26.7" fill="#7a9886"/><rect x="393.5" y="287.2" width="8.9" height="0.7" fill="#7a9886"/><rect x="393.5" y="291.7" width="8.9" height="0.7" fill="#7a9886"/><rect x="393.5" y="296.1" width="8.9" height="0.7" fill="#7a9886"/><rect x="393.5" y="300.6" width="8.9" height="0.7" fill="#7a9886"/><rect x="393.5" y="305.0" width="8.9" height="0.7" fill="#7a9886"/><path d="M391.9 354.7 L391.9 327.2 Q391.9 321.1 398.0 321.1 Q404.1 321.1 404.1 327.2 L404.1 354.7Z" fill="#c8c8c8"/><rect x="393.5" y="324.5" width="8.9" height="26.6" fill="#194a2d"/><rect x="397.6" y="324.5" width="0.7" height="26.6" fill="#7a9886"/><rect x="393.5" y="328.5" width="8.9" height="0.7" fill="#7a9886"/><rect x="393.5" y="333.0" width="8.9" height="0.7" fill="#7a9886"/><rect x="393.5" y="337.4" width="8.9" height="0.7" fill="#7a9886"/><rect x="393.5" y="341.8" width="8.9" height="0.7" fill="#7a9886"/><rect x="393.5" y="346.2" width="8.9" height="0.7" fill="#7a9886"/><path d="M408.0 273.9 L408.0 246.2 Q408.0 240.2 414.0 240.2 Q420.0 240.2 420.0 246.2 L420.0 273.9Z" fill="#c8c8c8"/><rect x="409.6" y="243.5" width="8.8" height="26.7" fill="#194a2d"/><rect x="413.6" y="243.5" width="0.7" height="26.7" fill="#7a9886"/><rect x="409.6" y="247.6" width="8.8" height="0.7" fill="#7a9886"/><rect x="409.6" y="252.0" width="8.8" height="0.7" fill="#7a9886"/><rect x="409.6" y="256.5" width="8.8" height="0.7" fill="#7a9886"/><rect x="409.6" y="260.9" width="8.8" height="0.7" fill="#7a9886"/><rect x="409.6" y="265.4" width="8.8" height="0.7" fill="#7a9886"/><path d="M408.0 314.7 L408.0 287.4 Q408.0 281.4 414.0 281.4 Q420.0 281.4 420.0 287.4 L420.0 314.7Z" fill="#c8c8c8"/><rect x="409.6" y="284.7" width="8.8" height="26.3" fill="#194a2d"/><rect x="413.6" y="284.7" width="0.7" height="26.3" fill="#7a9886"/><rect x="409.6" y="288.7" width="8.8" height="0.7" fill="#7a9886"/><rect x="409.6" y="293.1" width="8.8" height="0.7" fill="#7a9886"/><rect x="409.6" y="297.5" width="8.8" height="0.7" fill="#7a9886"/><rect x="409.6" y="301.9" width="8.8" height="0.7" fill="#7a9886"/><rect x="409.6" y="306.3" width="8.8" height="0.7" fill="#7a9886"/><path d="M408.0 355.5 L408.0 328.2 Q408.0 322.2 414.0 322.2 Q420.0 322.2 420.0 328.2 L420.0 355.5Z" fill="#c8c8c8"/><rect x="409.6" y="325.5" width="8.8" height="26.3" fill="#194a2d"/><rect x="413.6" y="325.5" width="0.7" height="26.3" fill="#7a9886"/><rect x="409.6" y="329.6" width="8.8" height="0.7" fill="#7a9886"/><rect x="409.6" y="333.9" width="8.8" height="0.7" fill="#7a9886"/><rect x="409.6" y="338.3" width="8.8" height="0.7" fill="#7a9886"/><rect x="409.6" y="342.7" width="8.8" height="0.7" fill="#7a9886"/><rect x="409.6" y="347.1" width="8.8" height="0.7" fill="#7a9886"/><path d="M424.6 275.5 L424.6 248.1 Q424.6 242.3 430.5 242.3 Q436.4 242.3 436.4 248.1 L436.4 275.5Z" fill="#c8c8c8"/><rect x="426.2" y="245.5" width="8.6" height="26.4" fill="#194a2d"/><rect x="430.1" y="245.5" width="0.7" height="26.4" fill="#7a9886"/><rect x="426.2" y="249.5" width="8.6" height="0.7" fill="#7a9886"/><rect x="426.2" y="253.9" width="8.6" height="0.7" fill="#7a9886"/><rect x="426.2" y="258.3" width="8.6" height="0.7" fill="#7a9886"/><rect x="426.2" y="262.7" width="8.6" height="0.7" fill="#7a9886"/><rect x="426.2" y="267.1" width="8.6" height="0.7" fill="#7a9886"/><path d="M424.6 315.9 L424.6 289.0 Q424.6 283.1 430.5 283.1 Q436.4 283.1 436.4 289.0 L436.4 315.9Z" fill="#c8c8c8"/><rect x="426.2" y="286.3" width="8.6" height="26.0" fill="#194a2d"/><rect x="430.1" y="286.3" width="0.7" height="26.0" fill="#7a9886"/><rect x="426.2" y="290.3" width="8.6" height="0.7" fill="#7a9886"/><rect x="426.2" y="294.6" width="8.6" height="0.7" fill="#7a9886"/><rect x="426.2" y="299.0" width="8.6" height="0.7" fill="#7a9886"/><rect x="426.2" y="303.3" width="8.6" height="0.7" fill="#7a9886"/><rect x="426.2" y="307.6" width="8.6" height="0.7" fill="#7a9886"/><path d="M424.6 356.3 L424.6 329.3 Q424.6 323.4 430.5 323.4 Q436.4 323.4 436.4 329.3 L436.4 356.3Z" fill="#c8c8c8"/><rect x="426.2" y="326.6" width="8.6" height="26.1" fill="#194a2d"/><rect x="430.1" y="326.6" width="0.7" height="26.1" fill="#7a9886"/><rect x="426.2" y="330.6" width="8.6" height="0.7" fill="#7a9886"/><rect x="426.2" y="335.0" width="8.6" height="0.7" fill="#7a9886"/><rect x="426.2" y="339.3" width="8.6" height="0.7" fill="#7a9886"/><rect x="426.2" y="343.7" width="8.6" height="0.7" fill="#7a9886"/><rect x="426.2" y="348.0" width="8.6" height="0.7" fill="#7a9886"/><path d="M438.7 276.9 L438.7 249.8 Q438.7 244.0 444.5 244.0 Q450.3 244.0 450.3 249.8 L450.3 276.9Z" fill="#c8c8c8"/><rect x="440.3" y="247.2" width="8.4" height="26.1" fill="#194a2d"/><rect x="444.1" y="247.2" width="0.7" height="26.1" fill="#7a9886"/><rect x="440.3" y="251.2" width="8.4" height="0.7" fill="#7a9886"/><rect x="440.3" y="255.6" width="8.4" height="0.7" fill="#7a9886"/><rect x="440.3" y="259.9" width="8.4" height="0.7" fill="#7a9886"/><rect x="440.3" y="264.2" width="8.4" height="0.7" fill="#7a9886"/><rect x="440.3" y="268.6" width="8.4" height="0.7" fill="#7a9886"/><path d="M438.7 317.0 L438.7 290.3 Q438.7 284.5 444.5 284.5 Q450.3 284.5 450.3 290.3 L450.3 317.0Z" fill="#c8c8c8"/><rect x="440.3" y="287.7" width="8.4" height="25.7" fill="#194a2d"/><rect x="444.1" y="287.7" width="0.7" height="25.7" fill="#7a9886"/><rect x="440.3" y="291.6" width="8.4" height="0.7" fill="#7a9886"/><rect x="440.3" y="295.9" width="8.4" height="0.7" fill="#7a9886"/><rect x="440.3" y="300.2" width="8.4" height="0.7" fill="#7a9886"/><rect x="440.3" y="304.5" width="8.4" height="0.7" fill="#7a9886"/><rect x="440.3" y="308.8" width="8.4" height="0.7" fill="#7a9886"/><path d="M438.7 357.0 L438.7 330.2 Q438.7 324.4 444.5 324.4 Q450.3 324.4 450.3 330.2 L450.3 357.0Z" fill="#c8c8c8"/><rect x="440.3" y="327.6" width="8.4" height="25.9" fill="#194a2d"/><rect x="444.1" y="327.6" width="0.7" height="25.9" fill="#7a9886"/><rect x="440.3" y="331.5" width="8.4" height="0.7" fill="#7a9886"/><rect x="440.3" y="335.8" width="8.4" height="0.7" fill="#7a9886"/><rect x="440.3" y="340.2" width="8.4" height="0.7" fill="#7a9886"/><rect x="440.3" y="344.5" width="8.4" height="0.7" fill="#7a9886"/><rect x="440.3" y="348.8" width="8.4" height="0.7" fill="#7a9886"/><path d="M453.3 278.4 L453.3 251.6 Q453.3 245.8 459.0 245.8 Q464.7 245.8 464.7 251.6 L464.7 278.4Z" fill="#c8c8c8"/><rect x="454.9" y="249.0" width="8.3" height="25.8" fill="#194a2d"/><rect x="458.6" y="249.0" width="0.7" height="25.8" fill="#7a9886"/><rect x="454.9" y="252.9" width="8.3" height="0.7" fill="#7a9886"/><rect x="454.9" y="257.2" width="8.3" height="0.7" fill="#7a9886"/><rect x="454.9" y="261.5" width="8.3" height="0.7" fill="#7a9886"/><rect x="454.9" y="265.8" width="8.3" height="0.7" fill="#7a9886"/><rect x="454.9" y="270.1" width="8.3" height="0.7" fill="#7a9886"/><path d="M453.3 318.1 L453.3 291.7 Q453.3 285.9 459.0 285.9 Q464.7 285.9 464.7 291.7 L464.7 318.1Z" fill="#c8c8c8"/><rect x="454.9" y="289.1" width="8.3" height="25.4" fill="#194a2d"/><rect x="458.6" y="289.1" width="0.7" height="25.4" fill="#7a9886"/><rect x="454.9" y="293.0" width="8.3" height="0.7" fill="#7a9886"/><rect x="454.9" y="297.2" width="8.3" height="0.7" fill="#7a9886"/><rect x="454.9" y="301.4" width="8.3" height="0.7" fill="#7a9886"/><rect x="454.9" y="305.7" width="8.3" height="0.7" fill="#7a9886"/><rect x="454.9" y="309.9" width="8.3" height="0.7" fill="#7a9886"/><path d="M453.3 357.8 L453.3 331.1 Q453.3 325.4 459.0 325.4 Q464.7 325.4 464.7 331.1 L464.7 357.8Z" fill="#c8c8c8"/><rect x="454.9" y="328.5" width="8.3" height="25.7" fill="#194a2d"/><rect x="458.6" y="328.5" width="0.7" height="25.7" fill="#7a9886"/><rect x="454.9" y="332.5" width="8.3" height="0.7" fill="#7a9886"/><rect x="454.9" y="336.7" width="8.3" height="0.7" fill="#7a9886"/><rect x="454.9" y="341.0" width="8.3" height="0.7" fill="#7a9886"/><rect x="454.9" y="345.3" width="8.3" height="0.7" fill="#7a9886"/><rect x="454.9" y="349.6" width="8.3" height="0.7" fill="#7a9886"/><path d="M469.0 279.9 L469.0 253.4 Q469.0 247.8 474.7 247.8 Q480.4 247.8 480.4 253.4 L480.4 279.9Z" fill="#c8c8c8"/><rect x="470.6" y="250.9" width="8.1" height="25.5" fill="#194a2d"/><rect x="474.3" y="250.9" width="0.7" height="25.5" fill="#7a9886"/><rect x="470.6" y="254.8" width="8.1" height="0.7" fill="#7a9886"/><rect x="470.6" y="259.0" width="8.1" height="0.7" fill="#7a9886"/><rect x="470.6" y="263.3" width="8.1" height="0.7" fill="#7a9886"/><rect x="470.6" y="267.5" width="8.1" height="0.7" fill="#7a9886"/><rect x="470.6" y="271.8" width="8.1" height="0.7" fill="#7a9886"/><path d="M469.0 319.2 L469.0 293.1 Q469.0 287.5 474.7 287.5 Q480.4 287.5 480.4 293.1 L480.4 319.2Z" fill="#c8c8c8"/><rect x="470.6" y="290.6" width="8.1" height="25.1" fill="#194a2d"/><rect x="474.3" y="290.6" width="0.7" height="25.1" fill="#7a9886"/><rect x="470.6" y="294.4" width="8.1" height="0.7" fill="#7a9886"/><rect x="470.6" y="298.6" width="8.1" height="0.7" fill="#7a9886"/><rect x="470.6" y="302.8" width="8.1" height="0.7" fill="#7a9886"/><rect x="470.6" y="307.0" width="8.1" height="0.7" fill="#7a9886"/><rect x="470.6" y="311.2" width="8.1" height="0.7" fill="#7a9886"/><path d="M469.0 358.5 L469.0 332.1 Q469.0 326.5 474.7 326.5 Q480.4 326.5 480.4 332.1 L480.4 358.5Z" fill="#c8c8c8"/><rect x="470.6" y="329.6" width="8.1" height="25.4" fill="#194a2d"/><rect x="474.3" y="329.6" width="0.7" height="25.4" fill="#7a9886"/><rect x="470.6" y="333.5" width="8.1" height="0.7" fill="#7a9886"/><rect x="470.6" y="337.7" width="8.1" height="0.7" fill="#7a9886"/><rect x="470.6" y="342.0" width="8.1" height="0.7" fill="#7a9886"/><rect x="470.6" y="346.2" width="8.1" height="0.7" fill="#7a9886"/><rect x="470.6" y="350.4" width="8.1" height="0.7" fill="#7a9886"/><path d="M484.4 281.4 L484.4 255.3 Q484.4 249.7 490.0 249.7 Q495.6 249.7 495.6 255.3 L495.6 281.4Z" fill="#c8c8c8"/><rect x="486.0" y="252.8" width="7.9" height="25.2" fill="#194a2d"/><rect x="489.6" y="252.8" width="0.7" height="25.2" fill="#7a9886"/><rect x="486.0" y="256.6" width="7.9" height="0.7" fill="#7a9886"/><rect x="486.0" y="260.8" width="7.9" height="0.7" fill="#7a9886"/><rect x="486.0" y="265.0" width="7.9" height="0.7" fill="#7a9886"/><rect x="486.0" y="269.2" width="7.9" height="0.7" fill="#7a9886"/><rect x="486.0" y="273.4" width="7.9" height="0.7" fill="#7a9886"/><path d="M484.4 320.4 L484.4 294.6 Q484.4 289.0 490.0 289.0 Q495.6 289.0 495.6 294.6 L495.6 320.4Z" fill="#c8c8c8"/><rect x="486.0" y="292.1" width="7.9" height="24.8" fill="#194a2d"/><rect x="489.6" y="292.1" width="0.7" height="24.8" fill="#7a9886"/><rect x="486.0" y="295.9" width="7.9" height="0.7" fill="#7a9886"/><rect x="486.0" y="300.0" width="7.9" height="0.7" fill="#7a9886"/><rect x="486.0" y="304.2" width="7.9" height="0.7" fill="#7a9886"/><rect x="486.0" y="308.3" width="7.9" height="0.7" fill="#7a9886"/><rect x="486.0" y="312.4" width="7.9" height="0.7" fill="#7a9886"/><path d="M484.4 359.3 L484.4 333.1 Q484.4 327.5 490.0 327.5 Q495.6 327.5 495.6 333.1 L495.6 359.3Z" fill="#c8c8c8"/><rect x="486.0" y="330.6" width="7.9" height="25.2" fill="#194a2d"/><rect x="489.6" y="330.6" width="0.7" height="25.2" fill="#7a9886"/><rect x="486.0" y="334.5" width="7.9" height="0.7" fill="#7a9886"/><rect x="486.0" y="338.7" width="7.9" height="0.7" fill="#7a9886"/><rect x="486.0" y="342.9" width="7.9" height="0.7" fill="#7a9886"/><rect x="486.0" y="347.1" width="7.9" height="0.7" fill="#7a9886"/><rect x="486.0" y="351.3" width="7.9" height="0.7" fill="#7a9886"/><path d="M498.2 282.8 L498.2 256.9 Q498.2 251.4 503.7 251.4 Q509.2 251.4 509.2 256.9 L509.2 282.8Z" fill="#c8c8c8"/><rect x="499.8" y="254.4" width="7.8" height="24.9" fill="#194a2d"/><rect x="503.3" y="254.4" width="0.7" height="24.9" fill="#7a9886"/><rect x="499.8" y="258.2" width="7.8" height="0.7" fill="#7a9886"/><rect x="499.8" y="262.4" width="7.8" height="0.7" fill="#7a9886"/><rect x="499.8" y="266.5" width="7.8" height="0.7" fill="#7a9886"/><rect x="499.8" y="270.7" width="7.8" height="0.7" fill="#7a9886"/><rect x="499.8" y="274.8" width="7.8" height="0.7" fill="#7a9886"/><path d="M498.2 321.4 L498.2 295.9 Q498.2 290.4 503.7 290.4 Q509.2 290.4 509.2 295.9 L509.2 321.4Z" fill="#c8c8c8"/><rect x="499.8" y="293.4" width="7.8" height="24.6" fill="#194a2d"/><rect x="503.3" y="293.4" width="0.7" height="24.6" fill="#7a9886"/><rect x="499.8" y="297.2" width="7.8" height="0.7" fill="#7a9886"/><rect x="499.8" y="301.3" width="7.8" height="0.7" fill="#7a9886"/><rect x="499.8" y="305.4" width="7.8" height="0.7" fill="#7a9886"/><rect x="499.8" y="309.5" width="7.8" height="0.7" fill="#7a9886"/><rect x="499.8" y="313.5" width="7.8" height="0.7" fill="#7a9886"/><path d="M498.2 360.0 L498.2 334.0 Q498.2 328.5 503.7 328.5 Q509.2 328.5 509.2 334.0 L509.2 360.0Z" fill="#c8c8c8"/><rect x="499.8" y="331.5" width="7.8" height="25.0" fill="#194a2d"/><rect x="503.3" y="331.5" width="0.7" height="25.0" fill="#7a9886"/><rect x="499.8" y="335.3" width="7.8" height="0.7" fill="#7a9886"/><rect x="499.8" y="339.5" width="7.8" height="0.7" fill="#7a9886"/><rect x="499.8" y="343.7" width="7.8" height="0.7" fill="#7a9886"/><rect x="499.8" y="347.8" width="7.8" height="0.7" fill="#7a9886"/><rect x="499.8" y="352.0" width="7.8" height="0.7" fill="#7a9886"/><path d="M526.0 286.6 L526.0 262.1 Q526.0 255.1 536.5 255.1 Q547.0 255.1 547.0 262.1 L547.0 286.6Z" fill="#c8c8c8"/><rect x="528.7" y="258.9" width="15.5" height="24.2" fill="#194a2d"/><rect x="533.6" y="258.9" width="0.7" height="24.2" fill="#7a9886"/><rect x="538.7" y="258.9" width="0.7" height="24.2" fill="#7a9886"/><rect x="528.7" y="264.6" width="15.5" height="0.7" fill="#7a9886"/><rect x="528.7" y="270.7" width="15.5" height="0.7" fill="#7a9886"/><rect x="528.7" y="276.7" width="15.5" height="0.7" fill="#7a9886"/><path d="M526.0 323.6 L526.0 300.3 Q526.0 293.3 536.5 293.3 Q547.0 293.3 547.0 300.3 L547.0 323.6Z" fill="#c8c8c8"/><rect x="528.7" y="297.2" width="15.5" height="23.1" fill="#194a2d"/><rect x="533.6" y="297.2" width="0.7" height="23.1" fill="#7a9886"/><rect x="538.7" y="297.2" width="0.7" height="23.1" fill="#7a9886"/><rect x="528.7" y="302.6" width="15.5" height="0.7" fill="#7a9886"/><rect x="528.7" y="308.4" width="15.5" height="0.7" fill="#7a9886"/><rect x="528.7" y="314.1" width="15.5" height="0.7" fill="#7a9886"/><path d="M526.0 361.8 L526.0 338.5 Q526.0 331.5 536.5 331.5 Q547.0 331.5 547.0 338.5 L547.0 361.8Z" fill="#c8c8c8"/><rect x="528.7" y="335.4" width="15.5" height="23.1" fill="#194a2d"/><rect x="533.6" y="335.4" width="0.7" height="23.1" fill="#7a9886"/><rect x="538.7" y="335.4" width="0.7" height="23.1" fill="#7a9886"/><rect x="528.7" y="340.8" width="15.5" height="0.7" fill="#7a9886"/><rect x="528.7" y="346.6" width="15.5" height="0.7" fill="#7a9886"/><rect x="528.7" y="352.3" width="15.5" height="0.7" fill="#7a9886"/><path d="M560.9 287.7 L560.9 262.4 Q560.9 257.4 565.9 257.4 Q570.9 257.4 570.9 262.4 L570.9 287.7Z" fill="#c8c8c8"/><rect x="562.5" y="260.2" width="6.8" height="24.2" fill="#194a2d"/><rect x="565.5" y="260.2" width="0.7" height="24.2" fill="#7a9886"/><rect x="562.5" y="264.7" width="6.8" height="0.7" fill="#7a9886"/><rect x="562.5" y="269.5" width="6.8" height="0.7" fill="#7a9886"/><rect x="562.5" y="274.4" width="6.8" height="0.7" fill="#7a9886"/><rect x="562.5" y="279.2" width="6.8" height="0.7" fill="#7a9886"/><path d="M560.9 324.7 L560.9 299.9 Q560.9 294.9 565.9 294.9 Q570.9 294.9 570.9 299.9 L570.9 324.7Z" fill="#c8c8c8"/><rect x="562.5" y="297.7" width="6.8" height="23.7" fill="#194a2d"/><rect x="565.5" y="297.7" width="0.7" height="23.7" fill="#7a9886"/><rect x="562.5" y="302.1" width="6.8" height="0.7" fill="#7a9886"/><rect x="562.5" y="306.8" width="6.8" height="0.7" fill="#7a9886"/><rect x="562.5" y="311.6" width="6.8" height="0.7" fill="#7a9886"/><rect x="562.5" y="316.3" width="6.8" height="0.7" fill="#7a9886"/><path d="M560.9 363.0 L560.9 337.0 Q560.9 332.0 565.9 332.0 Q570.9 332.0 570.9 337.0 L570.9 363.0Z" fill="#c8c8c8"/><rect x="562.5" y="334.8" width="6.8" height="24.8" fill="#194a2d"/><rect x="565.5" y="334.8" width="0.7" height="24.8" fill="#7a9886"/><rect x="562.5" y="339.4" width="6.8" height="0.7" fill="#7a9886"/><rect x="562.5" y="344.4" width="6.8" height="0.7" fill="#7a9886"/><rect x="562.5" y="349.3" width="6.8" height="0.7" fill="#7a9886"/><rect x="562.5" y="354.3" width="6.8" height="0.7" fill="#7a9886"/><path d="M580.3 290.0 L580.3 265.3 Q580.3 261.8 583.8 261.8 Q587.3 261.8 587.3 265.3 L587.3 290.0Z" fill="#c8c8c8"/><rect x="581.9" y="264.6" width="3.8" height="22.3" fill="#194a2d"/><rect x="583.4" y="264.6" width="0.7" height="22.3" fill="#7a9886"/><rect x="581.9" y="268.7" width="3.8" height="0.7" fill="#7a9886"/><rect x="581.9" y="273.2" width="3.8" height="0.7" fill="#7a9886"/><rect x="581.9" y="277.6" width="3.8" height="0.7" fill="#7a9886"/><rect x="581.9" y="282.1" width="3.8" height="0.7" fill="#7a9886"/><path d="M580.3 325.9 L580.3 301.3 Q580.3 297.8 583.8 297.8 Q587.3 297.8 587.3 301.3 L587.3 325.9Z" fill="#c8c8c8"/><rect x="581.9" y="300.6" width="3.8" height="22.2" fill="#194a2d"/><rect x="583.4" y="300.6" width="0.7" height="22.2" fill="#7a9886"/><rect x="581.9" y="304.7" width="3.8" height="0.7" fill="#7a9886"/><rect x="581.9" y="309.1" width="3.8" height="0.7" fill="#7a9886"/><rect x="581.9" y="313.6" width="3.8" height="0.7" fill="#7a9886"/><rect x="581.9" y="318.0" width="3.8" height="0.7" fill="#7a9886"/><path d="M580.3 363.0 L580.3 337.2 Q580.3 333.7 583.8 333.7 Q587.3 333.7 587.3 337.2 L587.3 363.0Z" fill="#c8c8c8"/><rect x="581.9" y="336.5" width="3.8" height="23.3" fill="#194a2d"/><rect x="583.4" y="336.5" width="0.7" height="23.3" fill="#7a9886"/><rect x="581.9" y="340.8" width="3.8" height="0.7" fill="#7a9886"/><rect x="581.9" y="345.5" width="3.8" height="0.7" fill="#7a9886"/><rect x="581.9" y="350.1" width="3.8" height="0.7" fill="#7a9886"/><rect x="581.9" y="354.8" width="3.8" height="0.7" fill="#7a9886"/><path d="M588.8 291.2 L588.8 268.3 Q588.8 263.1 594.0 263.1 Q599.2 263.1 599.2 268.3 L599.2 291.2Z" fill="#c8c8c8"/><rect x="590.4" y="266.0" width="7.2" height="22.1" fill="#194a2d"/><rect x="593.6" y="266.0" width="0.7" height="22.1" fill="#7a9886"/><rect x="590.4" y="270.1" width="7.2" height="0.7" fill="#7a9886"/><rect x="590.4" y="274.5" width="7.2" height="0.7" fill="#7a9886"/><rect x="590.4" y="278.9" width="7.2" height="0.7" fill="#7a9886"/><rect x="590.4" y="283.3" width="7.2" height="0.7" fill="#7a9886"/><path d="M588.8 326.7 L588.8 304.1 Q588.8 298.9 594.0 298.9 Q599.2 298.9 599.2 304.1 L599.2 326.7Z" fill="#c8c8c8"/><rect x="590.4" y="301.8" width="7.2" height="21.9" fill="#194a2d"/><rect x="593.6" y="301.8" width="0.7" height="21.9" fill="#7a9886"/><rect x="590.4" y="305.8" width="7.2" height="0.7" fill="#7a9886"/><rect x="590.4" y="310.2" width="7.2" height="0.7" fill="#7a9886"/><rect x="590.4" y="314.5" width="7.2" height="0.7" fill="#7a9886"/><rect x="590.4" y="318.9" width="7.2" height="0.7" fill="#7a9886"/><path d="M588.8 363.4 L588.8 339.6 Q588.8 334.4 594.0 334.4 Q599.2 334.4 599.2 339.6 L599.2 363.4Z" fill="#c8c8c8"/><rect x="590.4" y="337.3" width="7.2" height="22.9" fill="#194a2d"/><rect x="593.6" y="337.3" width="0.7" height="22.9" fill="#7a9886"/><rect x="590.4" y="341.5" width="7.2" height="0.7" fill="#7a9886"/><rect x="590.4" y="346.1" width="7.2" height="0.7" fill="#7a9886"/><rect x="590.4" y="350.7" width="7.2" height="0.7" fill="#7a9886"/><rect x="590.4" y="355.3" width="7.2" height="0.7" fill="#7a9886"/><path d="M601.4 292.6 L601.4 269.8 Q601.4 264.6 606.6 264.6 Q611.8 264.6 611.8 269.8 L611.8 292.6Z" fill="#c8c8c8"/><rect x="603.0" y="267.5" width="7.1" height="22.1" fill="#194a2d"/><rect x="606.2" y="267.5" width="0.7" height="22.1" fill="#7a9886"/><rect x="603.0" y="271.5" width="7.1" height="0.7" fill="#7a9886"/><rect x="603.0" y="275.9" width="7.1" height="0.7" fill="#7a9886"/><rect x="603.0" y="280.4" width="7.1" height="0.7" fill="#7a9886"/><rect x="603.0" y="284.8" width="7.1" height="0.7" fill="#7a9886"/><path d="M601.4 327.6 L601.4 305.3 Q601.4 300.2 606.6 300.2 Q611.8 300.2 611.8 305.3 L611.8 327.6Z" fill="#c8c8c8"/><rect x="603.0" y="303.0" width="7.1" height="21.6" fill="#194a2d"/><rect x="606.2" y="303.0" width="0.7" height="21.6" fill="#7a9886"/><rect x="603.0" y="307.0" width="7.1" height="0.7" fill="#7a9886"/><rect x="603.0" y="311.3" width="7.1" height="0.7" fill="#7a9886"/><rect x="603.0" y="315.6" width="7.1" height="0.7" fill="#7a9886"/><rect x="603.0" y="319.9" width="7.1" height="0.7" fill="#7a9886"/><path d="M601.4 363.9 L601.4 340.4 Q601.4 335.2 606.6 335.2 Q611.8 335.2 611.8 340.4 L611.8 363.9Z" fill="#c8c8c8"/><rect x="603.0" y="338.1" width="7.1" height="22.6" fill="#194a2d"/><rect x="606.2" y="338.1" width="0.7" height="22.6" fill="#7a9886"/><rect x="603.0" y="342.2" width="7.1" height="0.7" fill="#7a9886"/><rect x="603.0" y="346.8" width="7.1" height="0.7" fill="#7a9886"/><rect x="603.0" y="351.3" width="7.1" height="0.7" fill="#7a9886"/><rect x="603.0" y="355.8" width="7.1" height="0.7" fill="#7a9886"/><path d="M612.8 293.9 L612.8 271.1 Q612.8 266.0 617.9 266.0 Q623.0 266.0 623.0 271.1 L623.0 293.9Z" fill="#c8c8c8"/><rect x="614.4" y="268.8" width="7.0" height="22.0" fill="#194a2d"/><rect x="617.5" y="268.8" width="0.7" height="22.0" fill="#7a9886"/><rect x="614.4" y="272.9" width="7.0" height="0.7" fill="#7a9886"/><rect x="614.4" y="277.2" width="7.0" height="0.7" fill="#7a9886"/><rect x="614.4" y="281.6" width="7.0" height="0.7" fill="#7a9886"/><rect x="614.4" y="286.0" width="7.0" height="0.7" fill="#7a9886"/><path d="M612.8 328.5 L612.8 306.4 Q612.8 301.3 617.9 301.3 Q623.0 301.3 623.0 306.4 L623.0 328.5Z" fill="#c8c8c8"/><rect x="614.4" y="304.1" width="7.0" height="21.3" fill="#194a2d"/><rect x="617.5" y="304.1" width="0.7" height="21.3" fill="#7a9886"/><rect x="614.4" y="308.0" width="7.0" height="0.7" fill="#7a9886"/><rect x="614.4" y="312.3" width="7.0" height="0.7" fill="#7a9886"/><rect x="614.4" y="316.6" width="7.0" height="0.7" fill="#7a9886"/><rect x="614.4" y="320.8" width="7.0" height="0.7" fill="#7a9886"/><path d="M612.8 364.3 L612.8 341.1 Q612.8 336.0 617.9 336.0 Q623.0 336.0 623.0 341.1 L623.0 364.3Z" fill="#c8c8c8"/><rect x="614.4" y="338.8" width="7.0" height="22.4" fill="#194a2d"/><rect x="617.5" y="338.8" width="0.7" height="22.4" fill="#7a9886"/><rect x="614.4" y="342.9" width="7.0" height="0.7" fill="#7a9886"/><rect x="614.4" y="347.4" width="7.0" height="0.7" fill="#7a9886"/><rect x="614.4" y="351.9" width="7.0" height="0.7" fill="#7a9886"/><rect x="614.4" y="356.3" width="7.0" height="0.7" fill="#7a9886"/><path d="M623.8 295.1 L623.8 272.4 Q623.8 267.3 628.9 267.3 Q634.0 267.3 634.0 272.4 L634.0 295.1Z" fill="#c8c8c8"/><rect x="625.4" y="270.1" width="6.9" height="21.9" fill="#194a2d"/><rect x="628.5" y="270.1" width="0.7" height="21.9" fill="#7a9886"/><rect x="625.4" y="274.1" width="6.9" height="0.7" fill="#7a9886"/><rect x="625.4" y="278.5" width="6.9" height="0.7" fill="#7a9886"/><rect x="625.4" y="282.9" width="6.9" height="0.7" fill="#7a9886"/><rect x="625.4" y="287.3" width="6.9" height="0.7" fill="#7a9886"/><path d="M623.8 329.3 L623.8 307.5 Q623.8 302.4 628.9 302.4 Q634.0 302.4 634.0 307.5 L634.0 329.3Z" fill="#c8c8c8"/><rect x="625.4" y="305.2" width="6.9" height="21.1" fill="#194a2d"/><rect x="628.5" y="305.2" width="0.7" height="21.1" fill="#7a9886"/><rect x="625.4" y="309.1" width="6.9" height="0.7" fill="#7a9886"/><rect x="625.4" y="313.3" width="6.9" height="0.7" fill="#7a9886"/><rect x="625.4" y="317.5" width="6.9" height="0.7" fill="#7a9886"/><rect x="625.4" y="321.7" width="6.9" height="0.7" fill="#7a9886"/><path d="M623.8 364.7 L623.8 341.7 Q623.8 336.7 628.9 336.7 Q634.0 336.7 634.0 341.7 L634.0 364.7Z" fill="#c8c8c8"/><rect x="625.4" y="339.5" width="6.9" height="22.1" fill="#194a2d"/><rect x="628.5" y="339.5" width="0.7" height="22.1" fill="#7a9886"/><rect x="625.4" y="343.6" width="6.9" height="0.7" fill="#7a9886"/><rect x="625.4" y="348.0" width="6.9" height="0.7" fill="#7a9886"/><rect x="625.4" y="352.4" width="6.9" height="0.7" fill="#7a9886"/><rect x="625.4" y="356.8" width="6.9" height="0.7" fill="#7a9886"/><path d="M635.8 296.4 L635.8 273.8 Q635.8 268.8 640.8 268.8 Q645.8 268.8 645.8 273.8 L645.8 296.4Z" fill="#c8c8c8"/><rect x="637.4" y="271.6" width="6.8" height="21.8" fill="#194a2d"/><rect x="640.4" y="271.6" width="0.7" height="21.8" fill="#7a9886"/><rect x="637.4" y="275.6" width="6.8" height="0.7" fill="#7a9886"/><rect x="637.4" y="279.9" width="6.8" height="0.7" fill="#7a9886"/><rect x="637.4" y="284.3" width="6.8" height="0.7" fill="#7a9886"/><rect x="637.4" y="288.6" width="6.8" height="0.7" fill="#7a9886"/><path d="M635.8 330.1 L635.8 308.6 Q635.8 303.6 640.8 303.6 Q645.8 303.6 645.8 308.6 L645.8 330.1Z" fill="#c8c8c8"/><rect x="637.4" y="306.4" width="6.8" height="20.7" fill="#194a2d"/><rect x="640.4" y="306.4" width="0.7" height="20.7" fill="#7a9886"/><rect x="637.4" y="310.2" width="6.8" height="0.7" fill="#7a9886"/><rect x="637.4" y="314.4" width="6.8" height="0.7" fill="#7a9886"/><rect x="637.4" y="318.5" width="6.8" height="0.7" fill="#7a9886"/><rect x="637.4" y="322.6" width="6.8" height="0.7" fill="#7a9886"/><path d="M635.8 365.1 L635.8 342.5 Q635.8 337.5 640.8 337.5 Q645.8 337.5 645.8 342.5 L645.8 365.1Z" fill="#c8c8c8"/><rect x="637.4" y="340.3" width="6.8" height="21.8" fill="#194a2d"/><rect x="640.4" y="340.3" width="0.7" height="21.8" fill="#7a9886"/><rect x="637.4" y="344.3" width="6.8" height="0.7" fill="#7a9886"/><rect x="637.4" y="348.6" width="6.8" height="0.7" fill="#7a9886"/><rect x="637.4" y="353.0" width="6.8" height="0.7" fill="#7a9886"/><rect x="637.4" y="357.3" width="6.8" height="0.7" fill="#7a9886"/><path d="M646.6 297.6 L646.6 275.0 Q646.6 270.1 651.6 270.1 Q656.6 270.1 656.6 275.0 L656.6 297.6Z" fill="#c8c8c8"/><rect x="648.2" y="272.9" width="6.7" height="21.7" fill="#194a2d"/><rect x="651.2" y="272.9" width="0.7" height="21.7" fill="#7a9886"/><rect x="648.2" y="276.8" width="6.7" height="0.7" fill="#7a9886"/><rect x="648.2" y="281.2" width="6.7" height="0.7" fill="#7a9886"/><rect x="648.2" y="285.5" width="6.7" height="0.7" fill="#7a9886"/><rect x="648.2" y="289.9" width="6.7" height="0.7" fill="#7a9886"/><path d="M646.6 330.9 L646.6 309.7 Q646.6 304.7 651.6 304.7 Q656.6 304.7 656.6 309.7 L656.6 330.9Z" fill="#c8c8c8"/><rect x="648.2" y="307.5" width="6.7" height="20.4" fill="#194a2d"/><rect x="651.2" y="307.5" width="0.7" height="20.4" fill="#7a9886"/><rect x="648.2" y="311.2" width="6.7" height="0.7" fill="#7a9886"/><rect x="648.2" y="315.3" width="6.7" height="0.7" fill="#7a9886"/><rect x="648.2" y="319.4" width="6.7" height="0.7" fill="#7a9886"/><rect x="648.2" y="323.5" width="6.7" height="0.7" fill="#7a9886"/><path d="M646.6 365.5 L646.6 343.1 Q646.6 338.2 651.6 338.2 Q656.6 338.2 656.6 343.1 L656.6 365.5Z" fill="#c8c8c8"/><rect x="648.2" y="341.0" width="6.7" height="21.5" fill="#194a2d"/><rect x="651.2" y="341.0" width="0.7" height="21.5" fill="#7a9886"/><rect x="648.2" y="344.9" width="6.7" height="0.7" fill="#7a9886"/><rect x="648.2" y="349.2" width="6.7" height="0.7" fill="#7a9886"/><rect x="648.2" y="353.5" width="6.7" height="0.7" fill="#7a9886"/><rect x="648.2" y="357.8" width="6.7" height="0.7" fill="#7a9886"/><path d="M657.9 298.8 L657.9 276.3 Q657.9 271.4 662.8 271.4 Q667.7 271.4 667.7 276.3 L667.7 298.8Z" fill="#c8c8c8"/><rect x="659.5" y="274.2" width="6.6" height="21.6" fill="#194a2d"/><rect x="662.4" y="274.2" width="0.7" height="21.6" fill="#7a9886"/><rect x="659.5" y="278.2" width="6.6" height="0.7" fill="#7a9886"/><rect x="659.5" y="282.5" width="6.6" height="0.7" fill="#7a9886"/><rect x="659.5" y="286.8" width="6.6" height="0.7" fill="#7a9886"/><rect x="659.5" y="291.1" width="6.6" height="0.7" fill="#7a9886"/><path d="M657.9 331.8 L657.9 310.7 Q657.9 305.8 662.8 305.8 Q667.7 305.8 667.7 310.7 L667.7 331.8Z" fill="#c8c8c8"/><rect x="659.5" y="308.6" width="6.6" height="20.1" fill="#194a2d"/><rect x="662.4" y="308.6" width="0.7" height="20.1" fill="#7a9886"/><rect x="659.5" y="312.3" width="6.6" height="0.7" fill="#7a9886"/><rect x="659.5" y="316.3" width="6.6" height="0.7" fill="#7a9886"/><rect x="659.5" y="320.3" width="6.6" height="0.7" fill="#7a9886"/><rect x="659.5" y="324.4" width="6.6" height="0.7" fill="#7a9886"/><path d="M657.9 365.9 L657.9 343.8 Q657.9 338.9 662.8 338.9 Q667.7 338.9 667.7 343.8 L667.7 365.9Z" fill="#c8c8c8"/><rect x="659.5" y="341.7" width="6.6" height="21.2" fill="#194a2d"/><rect x="662.4" y="341.7" width="0.7" height="21.2" fill="#7a9886"/><rect x="659.5" y="345.6" width="6.6" height="0.7" fill="#7a9886"/><rect x="659.5" y="349.8" width="6.6" height="0.7" fill="#7a9886"/><rect x="659.5" y="354.1" width="6.6" height="0.7" fill="#7a9886"/><rect x="659.5" y="358.3" width="6.6" height="0.7" fill="#7a9886"/><path d="M667.3 299.8 L667.3 277.4 Q667.3 272.5 672.2 272.5 Q677.1 272.5 677.1 277.4 L677.1 299.8Z" fill="#c8c8c8"/><rect x="668.9" y="275.3" width="6.6" height="21.5" fill="#194a2d"/><rect x="671.9" y="275.3" width="0.7" height="21.5" fill="#7a9886"/><rect x="668.9" y="279.3" width="6.6" height="0.7" fill="#7a9886"/><rect x="668.9" y="283.6" width="6.6" height="0.7" fill="#7a9886"/><rect x="668.9" y="287.9" width="6.6" height="0.7" fill="#7a9886"/><rect x="668.9" y="292.2" width="6.6" height="0.7" fill="#7a9886"/><path d="M667.3 332.4 L667.3 311.6 Q667.3 306.8 672.2 306.8 Q677.1 306.8 677.1 311.6 L677.1 332.4Z" fill="#c8c8c8"/><rect x="668.9" y="309.6" width="6.6" height="19.9" fill="#194a2d"/><rect x="671.9" y="309.6" width="0.7" height="19.9" fill="#7a9886"/><rect x="668.9" y="313.2" width="6.6" height="0.7" fill="#7a9886"/><rect x="668.9" y="317.2" width="6.6" height="0.7" fill="#7a9886"/><rect x="668.9" y="321.1" width="6.6" height="0.7" fill="#7a9886"/><rect x="668.9" y="325.1" width="6.6" height="0.7" fill="#7a9886"/><path d="M667.3 366.2 L667.3 344.4 Q667.3 339.5 672.2 339.5 Q677.1 339.5 677.1 344.4 L677.1 366.2Z" fill="#c8c8c8"/><rect x="668.9" y="342.3" width="6.6" height="20.9" fill="#194a2d"/><rect x="671.9" y="342.3" width="0.7" height="20.9" fill="#7a9886"/><rect x="668.9" y="346.1" width="6.6" height="0.7" fill="#7a9886"/><rect x="668.9" y="350.3" width="6.6" height="0.7" fill="#7a9886"/><rect x="668.9" y="354.5" width="6.6" height="0.7" fill="#7a9886"/><rect x="668.9" y="358.7" width="6.6" height="0.7" fill="#7a9886"/><path d="M679.1 301.1 L679.1 278.8 Q679.1 273.9 683.9 273.9 Q688.7 273.9 688.7 278.8 L688.7 301.1Z" fill="#c8c8c8"/><rect x="680.7" y="276.7" width="6.5" height="21.4" fill="#194a2d"/><rect x="683.5" y="276.7" width="0.7" height="21.4" fill="#7a9886"/><rect x="680.7" y="280.7" width="6.5" height="0.7" fill="#7a9886"/><rect x="680.7" y="284.9" width="6.5" height="0.7" fill="#7a9886"/><rect x="680.7" y="289.2" width="6.5" height="0.7" fill="#7a9886"/><rect x="680.7" y="293.5" width="6.5" height="0.7" fill="#7a9886"/><path d="M679.1 333.3 L679.1 312.8 Q679.1 307.9 683.9 307.9 Q688.7 307.9 688.7 312.8 L688.7 333.3Z" fill="#c8c8c8"/><rect x="680.7" y="310.7" width="6.5" height="19.6" fill="#194a2d"/><rect x="683.5" y="310.7" width="0.7" height="19.6" fill="#7a9886"/><rect x="680.7" y="314.3" width="6.5" height="0.7" fill="#7a9886"/><rect x="680.7" y="318.2" width="6.5" height="0.7" fill="#7a9886"/><rect x="680.7" y="322.1" width="6.5" height="0.7" fill="#7a9886"/><rect x="680.7" y="326.0" width="6.5" height="0.7" fill="#7a9886"/><path d="M679.1 366.7 L679.1 345.1 Q679.1 340.3 683.9 340.3 Q688.7 340.3 688.7 345.1 L688.7 366.7Z" fill="#c8c8c8"/><rect x="680.7" y="343.1" width="6.5" height="20.6" fill="#194a2d"/><rect x="683.5" y="343.1" width="0.7" height="20.6" fill="#7a9886"/><rect x="680.7" y="346.8" width="6.5" height="0.7" fill="#7a9886"/><rect x="680.7" y="351.0" width="6.5" height="0.7" fill="#7a9886"/><rect x="680.7" y="355.1" width="6.5" height="0.7" fill="#7a9886"/><rect x="680.7" y="359.2" width="6.5" height="0.7" fill="#7a9886"/><path d="M689.9 302.3 L689.9 280.0 Q689.9 275.2 694.7 275.2 Q699.5 275.2 699.5 280.0 L699.5 302.3Z" fill="#c8c8c8"/><rect x="691.5" y="278.0" width="6.4" height="21.3" fill="#194a2d"/><rect x="694.4" y="278.0" width="0.7" height="21.3" fill="#7a9886"/><rect x="691.5" y="281.9" width="6.4" height="0.7" fill="#7a9886"/><rect x="691.5" y="286.2" width="6.4" height="0.7" fill="#7a9886"/><rect x="691.5" y="290.5" width="6.4" height="0.7" fill="#7a9886"/><rect x="691.5" y="294.7" width="6.4" height="0.7" fill="#7a9886"/><path d="M689.9 334.1 L689.9 313.8 Q689.9 309.0 694.7 309.0 Q699.5 309.0 699.5 313.8 L699.5 334.1Z" fill="#c8c8c8"/><rect x="691.5" y="311.8" width="6.4" height="19.3" fill="#194a2d"/><rect x="694.4" y="311.8" width="0.7" height="19.3" fill="#7a9886"/><rect x="691.5" y="315.3" width="6.4" height="0.7" fill="#7a9886"/><rect x="691.5" y="319.2" width="6.4" height="0.7" fill="#7a9886"/><rect x="691.5" y="323.0" width="6.4" height="0.7" fill="#7a9886"/><rect x="691.5" y="326.9" width="6.4" height="0.7" fill="#7a9886"/><path d="M689.9 367.0 L689.9 345.8 Q689.9 341.0 694.7 341.0 Q699.5 341.0 699.5 345.8 L699.5 367.0Z" fill="#c8c8c8"/><rect x="691.5" y="343.8" width="6.4" height="20.3" fill="#194a2d"/><rect x="694.4" y="343.8" width="0.7" height="20.3" fill="#7a9886"/><rect x="691.5" y="347.5" width="6.4" height="0.7" fill="#7a9886"/><rect x="691.5" y="351.5" width="6.4" height="0.7" fill="#7a9886"/><rect x="691.5" y="355.6" width="6.4" height="0.7" fill="#7a9886"/><rect x="691.5" y="359.6" width="6.4" height="0.7" fill="#7a9886"/><path d="M699.6 303.4 L699.6 281.1 Q699.6 276.4 704.4 276.4 Q709.1 276.4 709.1 281.1 L709.1 303.4Z" fill="#c8c8c8"/><rect x="701.2" y="279.2" width="6.3" height="21.2" fill="#194a2d"/><rect x="704.0" y="279.2" width="0.7" height="21.2" fill="#7a9886"/><rect x="701.2" y="283.1" width="6.3" height="0.7" fill="#7a9886"/><rect x="701.2" y="287.3" width="6.3" height="0.7" fill="#7a9886"/><rect x="701.2" y="291.6" width="6.3" height="0.7" fill="#7a9886"/><rect x="701.2" y="295.8" width="6.3" height="0.7" fill="#7a9886"/><path d="M699.6 334.8 L699.6 314.8 Q699.6 310.0 704.4 310.0 Q709.1 310.0 709.1 314.8 L709.1 334.8Z" fill="#c8c8c8"/><rect x="701.2" y="312.8" width="6.3" height="19.0" fill="#194a2d"/><rect x="704.0" y="312.8" width="0.7" height="19.0" fill="#7a9886"/><rect x="701.2" y="316.2" width="6.3" height="0.7" fill="#7a9886"/><rect x="701.2" y="320.1" width="6.3" height="0.7" fill="#7a9886"/><rect x="701.2" y="323.8" width="6.3" height="0.7" fill="#7a9886"/><rect x="701.2" y="327.6" width="6.3" height="0.7" fill="#7a9886"/><path d="M699.6 367.4 L699.6 346.4 Q699.6 341.6 704.4 341.6 Q709.1 341.6 709.1 346.4 L709.1 367.4Z" fill="#c8c8c8"/><rect x="701.2" y="344.4" width="6.3" height="20.0" fill="#194a2d"/><rect x="704.0" y="344.4" width="0.7" height="20.0" fill="#7a9886"/><rect x="701.2" y="348.1" width="6.3" height="0.7" fill="#7a9886"/><rect x="701.2" y="352.1" width="6.3" height="0.7" fill="#7a9886"/><rect x="701.2" y="356.0" width="6.3" height="0.7" fill="#7a9886"/><rect x="701.2" y="360.0" width="6.3" height="0.7" fill="#7a9886"/><path d="M709.2 304.5 L709.2 285.7 Q709.2 278.7 717.7 278.7 Q726.2 278.7 726.2 285.7 L726.2 304.5Z" fill="#c8c8c8"/><rect x="711.4" y="282.6" width="12.6" height="18.9" fill="#194a2d"/><rect x="715.3" y="282.6" width="0.7" height="18.9" fill="#7a9886"/><rect x="719.4" y="282.6" width="0.7" height="18.9" fill="#7a9886"/><rect x="711.4" y="286.9" width="12.6" height="0.7" fill="#7a9886"/><rect x="711.4" y="291.7" width="12.6" height="0.7" fill="#7a9886"/><rect x="711.4" y="296.4" width="12.6" height="0.7" fill="#7a9886"/><path d="M709.2 337.0 L709.2 319.4 Q709.2 312.4 717.7 312.4 Q726.2 312.4 726.2 319.4 L726.2 337.0Z" fill="#c8c8c8"/><rect x="711.4" y="316.2" width="12.6" height="17.8" fill="#194a2d"/><rect x="715.3" y="316.2" width="0.7" height="17.8" fill="#7a9886"/><rect x="719.4" y="316.2" width="0.7" height="17.8" fill="#7a9886"/><rect x="711.4" y="320.3" width="12.6" height="0.7" fill="#7a9886"/><rect x="711.4" y="324.8" width="12.6" height="0.7" fill="#7a9886"/><rect x="711.4" y="329.2" width="12.6" height="0.7" fill="#7a9886"/><path d="M709.2 368.5 L709.2 350.8 Q709.2 343.8 717.7 343.8 Q726.2 343.8 726.2 350.8 L726.2 368.5Z" fill="#c8c8c8"/><rect x="711.4" y="347.7" width="12.6" height="17.8" fill="#194a2d"/><rect x="715.3" y="347.7" width="0.7" height="17.8" fill="#7a9886"/><rect x="719.4" y="347.7" width="0.7" height="17.8" fill="#7a9886"/><rect x="711.4" y="351.8" width="12.6" height="0.7" fill="#7a9886"/><rect x="711.4" y="356.2" width="12.6" height="0.7" fill="#7a9886"/><rect x="711.4" y="360.7" width="12.6" height="0.7" fill="#7a9886"/><path d="M751.3 309.6 L751.3 289.5 Q751.3 285.0 755.8 285.0 Q760.3 285.0 760.3 289.5 L760.3 309.6Z" fill="#c8c8c8"/><rect x="752.9" y="287.8" width="5.8" height="18.8" fill="#194a2d"/><rect x="755.4" y="287.8" width="0.7" height="18.8" fill="#7a9886"/><rect x="752.9" y="291.2" width="5.8" height="0.7" fill="#7a9886"/><rect x="752.9" y="295.0" width="5.8" height="0.7" fill="#7a9886"/><rect x="752.9" y="298.7" width="5.8" height="0.7" fill="#7a9886"/><rect x="752.9" y="302.5" width="5.8" height="0.7" fill="#7a9886"/><path d="M751.3 340.0 L751.3 321.5 Q751.3 317.0 755.8 317.0 Q760.3 317.0 760.3 321.5 L760.3 340.0Z" fill="#c8c8c8"/><rect x="752.9" y="319.8" width="5.8" height="17.2" fill="#194a2d"/><rect x="755.4" y="319.8" width="0.7" height="17.2" fill="#7a9886"/><rect x="752.9" y="322.9" width="5.8" height="0.7" fill="#7a9886"/><rect x="752.9" y="326.3" width="5.8" height="0.7" fill="#7a9886"/><rect x="752.9" y="329.8" width="5.8" height="0.7" fill="#7a9886"/><rect x="752.9" y="333.2" width="5.8" height="0.7" fill="#7a9886"/><path d="M751.3 370.6 L751.3 351.9 Q751.3 347.4 755.8 347.4 Q760.3 347.4 760.3 351.9 L760.3 370.6Z" fill="#c8c8c8"/><rect x="752.9" y="350.2" width="5.8" height="17.4" fill="#194a2d"/><rect x="755.4" y="350.2" width="0.7" height="17.4" fill="#7a9886"/><rect x="752.9" y="353.3" width="5.8" height="0.7" fill="#7a9886"/><rect x="752.9" y="356.8" width="5.8" height="0.7" fill="#7a9886"/><rect x="752.9" y="360.3" width="5.8" height="0.7" fill="#7a9886"/><rect x="752.9" y="363.8" width="5.8" height="0.7" fill="#7a9886"/><path d="M761.1 310.2 L761.1 290.4 Q761.1 286.0 765.5 286.0 Q769.9 286.0 769.9 290.4 L769.9 310.2Z" fill="#c8c8c8"/><rect x="762.7" y="288.8" width="5.6" height="18.4" fill="#194a2d"/><rect x="765.1" y="288.8" width="0.7" height="18.4" fill="#7a9886"/><rect x="762.7" y="292.1" width="5.6" height="0.7" fill="#7a9886"/><rect x="762.7" y="295.8" width="5.6" height="0.7" fill="#7a9886"/><rect x="762.7" y="299.5" width="5.6" height="0.7" fill="#7a9886"/><rect x="762.7" y="303.1" width="5.6" height="0.7" fill="#7a9886"/><path d="M761.1 340.6 L761.1 322.0 Q761.1 317.6 765.5 317.6 Q769.9 317.6 769.9 322.0 L769.9 340.6Z" fill="#c8c8c8"/><rect x="762.7" y="320.4" width="5.6" height="17.2" fill="#194a2d"/><rect x="765.1" y="320.4" width="0.7" height="17.2" fill="#7a9886"/><rect x="762.7" y="323.5" width="5.6" height="0.7" fill="#7a9886"/><rect x="762.7" y="326.9" width="5.6" height="0.7" fill="#7a9886"/><rect x="762.7" y="330.4" width="5.6" height="0.7" fill="#7a9886"/><rect x="762.7" y="333.8" width="5.6" height="0.7" fill="#7a9886"/><path d="M761.1 371.0 L761.1 352.4 Q761.1 348.0 765.5 348.0 Q769.9 348.0 769.9 352.4 L769.9 371.0Z" fill="#c8c8c8"/><rect x="762.7" y="350.8" width="5.6" height="17.2" fill="#194a2d"/><rect x="765.1" y="350.8" width="0.7" height="17.2" fill="#7a9886"/><rect x="762.7" y="353.9" width="5.6" height="0.7" fill="#7a9886"/><rect x="762.7" y="357.3" width="5.6" height="0.7" fill="#7a9886"/><rect x="762.7" y="360.8" width="5.6" height="0.7" fill="#7a9886"/><rect x="762.7" y="364.2" width="5.6" height="0.7" fill="#7a9886"/><path d="M769.7 310.7 L769.7 291.3 Q769.7 287.0 774.0 287.0 Q778.3 287.0 778.3 291.3 L778.3 310.7Z" fill="#c8c8c8"/><rect x="771.3" y="289.8" width="5.5" height="17.9" fill="#194a2d"/><rect x="773.6" y="289.8" width="0.7" height="17.9" fill="#7a9886"/><rect x="771.3" y="293.0" width="5.5" height="0.7" fill="#7a9886"/><rect x="771.3" y="296.6" width="5.5" height="0.7" fill="#7a9886"/><rect x="771.3" y="300.2" width="5.5" height="0.7" fill="#7a9886"/><rect x="771.3" y="303.8" width="5.5" height="0.7" fill="#7a9886"/><path d="M769.7 341.3 L769.7 322.5 Q769.7 318.2 774.0 318.2 Q778.3 318.2 778.3 322.5 L778.3 341.3Z" fill="#c8c8c8"/><rect x="771.3" y="321.0" width="5.5" height="17.3" fill="#194a2d"/><rect x="773.6" y="321.0" width="0.7" height="17.3" fill="#7a9886"/><rect x="771.3" y="324.1" width="5.5" height="0.7" fill="#7a9886"/><rect x="771.3" y="327.6" width="5.5" height="0.7" fill="#7a9886"/><rect x="771.3" y="331.0" width="5.5" height="0.7" fill="#7a9886"/><rect x="771.3" y="334.5" width="5.5" height="0.7" fill="#7a9886"/><path d="M769.7 371.4 L769.7 352.9 Q769.7 348.6 774.0 348.6 Q778.3 348.6 778.3 352.9 L778.3 371.4Z" fill="#c8c8c8"/><rect x="771.3" y="351.4" width="5.5" height="17.0" fill="#194a2d"/><rect x="773.6" y="351.4" width="0.7" height="17.0" fill="#7a9886"/><rect x="771.3" y="354.4" width="5.5" height="0.7" fill="#7a9886"/><rect x="771.3" y="357.8" width="5.5" height="0.7" fill="#7a9886"/><rect x="771.3" y="361.2" width="5.5" height="0.7" fill="#7a9886"/><rect x="771.3" y="364.6" width="5.5" height="0.7" fill="#7a9886"/><path d="M778.4 311.3 L778.4 292.2 Q778.4 288.0 782.6 288.0 Q786.9 288.0 786.9 292.2 L786.9 311.3Z" fill="#c8c8c8"/><rect x="780.0" y="290.8" width="5.3" height="17.5" fill="#194a2d"/><rect x="782.2" y="290.8" width="0.7" height="17.5" fill="#7a9886"/><rect x="780.0" y="293.9" width="5.3" height="0.7" fill="#7a9886"/><rect x="780.0" y="297.4" width="5.3" height="0.7" fill="#7a9886"/><rect x="780.0" y="300.9" width="5.3" height="0.7" fill="#7a9886"/><rect x="780.0" y="304.4" width="5.3" height="0.7" fill="#7a9886"/><path d="M778.4 341.9 L778.4 323.1 Q778.4 318.8 782.6 318.8 Q786.9 318.8 786.9 323.1 L786.9 341.9Z" fill="#c8c8c8"/><rect x="780.0" y="321.6" width="5.3" height="17.3" fill="#194a2d"/><rect x="782.2" y="321.6" width="0.7" height="17.3" fill="#7a9886"/><rect x="780.0" y="324.7" width="5.3" height="0.7" fill="#7a9886"/><rect x="780.0" y="328.2" width="5.3" height="0.7" fill="#7a9886"/><rect x="780.0" y="331.6" width="5.3" height="0.7" fill="#7a9886"/><rect x="780.0" y="335.1" width="5.3" height="0.7" fill="#7a9886"/><path d="M778.4 371.8 L778.4 353.4 Q778.4 349.2 782.6 349.2 Q786.9 349.2 786.9 353.4 L786.9 371.8Z" fill="#c8c8c8"/><rect x="780.0" y="352.0" width="5.3" height="16.8" fill="#194a2d"/><rect x="782.2" y="352.0" width="0.7" height="16.8" fill="#7a9886"/><rect x="780.0" y="355.0" width="5.3" height="0.7" fill="#7a9886"/><rect x="780.0" y="358.4" width="5.3" height="0.7" fill="#7a9886"/><rect x="780.0" y="361.7" width="5.3" height="0.7" fill="#7a9886"/><rect x="780.0" y="365.1" width="5.3" height="0.7" fill="#7a9886"/><path d="M786.8 311.9 L786.8 293.2 Q786.8 289.0 791.0 289.0 Q795.2 289.0 795.2 293.2 L795.2 311.9Z" fill="#c8c8c8"/><rect x="788.4" y="291.8" width="5.1" height="17.1" fill="#194a2d"/><rect x="790.6" y="291.8" width="0.7" height="17.1" fill="#7a9886"/><rect x="788.4" y="294.9" width="5.1" height="0.7" fill="#7a9886"/><rect x="788.4" y="298.3" width="5.1" height="0.7" fill="#7a9886"/><rect x="788.4" y="301.7" width="5.1" height="0.7" fill="#7a9886"/><rect x="788.4" y="305.1" width="5.1" height="0.7" fill="#7a9886"/><path d="M786.8 342.5 L786.8 323.6 Q786.8 319.4 791.0 319.4 Q795.2 319.4 795.2 323.6 L795.2 342.5Z" fill="#c8c8c8"/><rect x="788.4" y="322.2" width="5.1" height="17.3" fill="#194a2d"/><rect x="790.6" y="322.2" width="0.7" height="17.3" fill="#7a9886"/><rect x="788.4" y="325.3" width="5.1" height="0.7" fill="#7a9886"/><rect x="788.4" y="328.8" width="5.1" height="0.7" fill="#7a9886"/><rect x="788.4" y="332.2" width="5.1" height="0.7" fill="#7a9886"/><rect x="788.4" y="335.7" width="5.1" height="0.7" fill="#7a9886"/><path d="M786.8 372.2 L786.8 354.0 Q786.8 349.8 791.0 349.8 Q795.2 349.8 795.2 354.0 L795.2 372.2Z" fill="#c8c8c8"/><rect x="788.4" y="352.6" width="5.1" height="16.6" fill="#194a2d"/><rect x="790.6" y="352.6" width="0.7" height="16.6" fill="#7a9886"/><rect x="788.4" y="355.6" width="5.1" height="0.7" fill="#7a9886"/><rect x="788.4" y="358.9" width="5.1" height="0.7" fill="#7a9886"/><rect x="788.4" y="362.2" width="5.1" height="0.7" fill="#7a9886"/><rect x="788.4" y="365.5" width="5.1" height="0.7" fill="#7a9886"/><path d="M795.6 312.4 L795.6 294.1 Q795.6 290.0 799.7 290.0 Q803.8 290.0 803.8 294.1 L803.8 312.4Z" fill="#c8c8c8"/><rect x="797.2" y="292.8" width="5.0" height="16.6" fill="#194a2d"/><rect x="799.4" y="292.8" width="0.7" height="16.6" fill="#7a9886"/><rect x="797.2" y="295.8" width="5.0" height="0.7" fill="#7a9886"/><rect x="797.2" y="299.1" width="5.0" height="0.7" fill="#7a9886"/><rect x="797.2" y="302.4" width="5.0" height="0.7" fill="#7a9886"/><rect x="797.2" y="305.8" width="5.0" height="0.7" fill="#7a9886"/><path d="M795.6 343.2 L795.6 324.1 Q795.6 320.0 799.7 320.0 Q803.8 320.0 803.8 324.1 L803.8 343.2Z" fill="#c8c8c8"/><rect x="797.2" y="322.8" width="5.0" height="17.4" fill="#194a2d"/><rect x="799.4" y="322.8" width="0.7" height="17.4" fill="#7a9886"/><rect x="797.2" y="325.9" width="5.0" height="0.7" fill="#7a9886"/><rect x="797.2" y="329.4" width="5.0" height="0.7" fill="#7a9886"/><rect x="797.2" y="332.9" width="5.0" height="0.7" fill="#7a9886"/><rect x="797.2" y="336.3" width="5.0" height="0.7" fill="#7a9886"/><path d="M795.6 372.6 L795.6 354.5 Q795.6 350.4 799.7 350.4 Q803.8 350.4 803.8 354.5 L803.8 372.6Z" fill="#c8c8c8"/><rect x="797.2" y="353.2" width="5.0" height="16.4" fill="#194a2d"/><rect x="799.4" y="353.2" width="0.7" height="16.4" fill="#7a9886"/><rect x="797.2" y="356.1" width="5.0" height="0.7" fill="#7a9886"/><rect x="797.2" y="359.4" width="5.0" height="0.7" fill="#7a9886"/><rect x="797.2" y="362.7" width="5.0" height="0.7" fill="#7a9886"/><rect x="797.2" y="366.0" width="5.0" height="0.7" fill="#7a9886"/><path d="M804.3 313.0 L804.3 295.0 Q804.3 291.0 808.3 291.0 Q812.3 291.0 812.3 295.0 L812.3 313.0Z" fill="#c8c8c8"/><rect x="805.9" y="293.8" width="4.8" height="16.2" fill="#194a2d"/><rect x="807.9" y="293.8" width="0.7" height="16.2" fill="#7a9886"/><rect x="805.9" y="296.7" width="4.8" height="0.7" fill="#7a9886"/><rect x="805.9" y="299.9" width="4.8" height="0.7" fill="#7a9886"/><rect x="805.9" y="303.2" width="4.8" height="0.7" fill="#7a9886"/><rect x="805.9" y="306.4" width="4.8" height="0.7" fill="#7a9886"/><path d="M804.3 343.8 L804.3 324.6 Q804.3 320.6 808.3 320.6 Q812.3 320.6 812.3 324.6 L812.3 343.8Z" fill="#c8c8c8"/><rect x="805.9" y="323.4" width="4.8" height="17.4" fill="#194a2d"/><rect x="807.9" y="323.4" width="0.7" height="17.4" fill="#7a9886"/><rect x="805.9" y="326.5" width="4.8" height="0.7" fill="#7a9886"/><rect x="805.9" y="330.0" width="4.8" height="0.7" fill="#7a9886"/><rect x="805.9" y="333.5" width="4.8" height="0.7" fill="#7a9886"/><rect x="805.9" y="337.0" width="4.8" height="0.7" fill="#7a9886"/><path d="M804.3 373.0 L804.3 355.0 Q804.3 351.0 808.3 351.0 Q812.3 351.0 812.3 355.0 L812.3 373.0Z" fill="#c8c8c8"/><rect x="805.9" y="353.8" width="4.8" height="16.2" fill="#194a2d"/><rect x="807.9" y="353.8" width="0.7" height="16.2" fill="#7a9886"/><rect x="805.9" y="356.7" width="4.8" height="0.7" fill="#7a9886"/><rect x="805.9" y="359.9" width="4.8" height="0.7" fill="#7a9886"/><rect x="805.9" y="363.2" width="4.8" height="0.7" fill="#7a9886"/><rect x="805.9" y="366.4" width="4.8" height="0.7" fill="#7a9886"/><polygon points="155,231 262,211 262,217 155,237" fill="#e0e0e0"/><polygon points="262,211 373,224 552,247.5 552,251.5 373,229 262,216.5" fill="#e2e2e2"/><polygon points="373,224 386,225.5 386,231 373,229.5" fill="#f4f4f4"/><polygon points="552,247.5 580,252.5 580,255.5 552,250.5" fill="#e6e6e6"/><polygon points="580,252.5 727,272.5 727,276 580,256.5" fill="#f0f0f0"/><polygon points="752,275.5 822,285 822,289.2 752,280" fill="#f4f4f4"/><rect x="337" y="365" width="34" height="7" fill="#ececec"/><rect x="547.5" y="371" width="24.5" height="7.4" fill="#ececec"/><polygon points="9,268.3 111,265 111,355 124,355 124,361 9,357" fill="#5c5c5c"/><polygon points="24,272 111,270 111,280.4 12,272.8" fill="#2f2f2f"/><defs><linearGradient id="wb1" x1="0" x2="1"><stop offset="0" stop-color="#fefefe"/><stop offset="1" stop-color="#f2f2f2"/></linearGradient><linearGradient id="wb2" x1="0" x2="1"><stop offset="0" stop-color="#f7f7f7"/><stop offset="1" stop-color="#ececec"/></linearGradient></defs><polygon points="12,272.8 111,280.4 124,281 124,361 117,360.5 12,357.4" fill="url(#wb1)"/><polygon points="111,264.6 183,264 183,360 200,360.5 200,365 117,365 117,360.5 124,361 124,355 111,355" fill="#636363"/><rect x="120" y="269" width="12" height="1.2" fill="#333"/><rect x="155" y="268" width="12" height="1.2" fill="#333"/><polygon points="183,264 288,272.7 288,363.6 183,359.5" fill="url(#wb2)"/></svg>
<div class="t" style="left:2px;top:724px">Ready</div>
<div class="a" style="left:407px;top:722px;width:175px;height:15px;border-top:1px solid #aca899;border-left:1px solid #aca899"></div>
<div class="a" style="left:585px;top:722px;width:260px;height:15px;border-top:1px solid #aca899;border-left:1px solid #aca899"></div>
<div class="t" style="left:587px;top:724px;letter-spacing:-0.1px">Object:2000:right rear entry</div>
<div class="a" style="left:848px;top:722px;width:174px;height:15px;border-top:1px solid #aca899;border-left:1px solid #aca899"></div>
<div class="t" style="left:850px;top:724px;letter-spacing:-0.3px">TrainSim Modeler Pro</div>
<div class="a" style="left:0;top:737px;width:92px;height:1px;background:#b8e0b0"></div><div class="a" style="left:0;top:738px;width:92px;height:1px;background:#2d7a2d"></div>
<div class="a" style="left:92px;top:737px;width:932px;height:1px;background:#c0d4f8"></div><div class="a" style="left:92px;top:738px;width:932px;height:1px;background:#2458c8"></div>
<div class="a" style="left:669px;top:56px;width:354px;height:69px;background:#6f8ee0;border-radius:7px 7px 0 0;box-shadow:inset 0 1px 0 #5f7cc2"></div>
<div class="a" style="left:670px;top:57px;width:352px;height:28px;border-radius:6px 6px 0 0;background:linear-gradient(180deg,#94b4f8 0px,#94b4f8 1px,#7e9ce2 3px,#7894de 10px,#7896e0 15px,#7aa2e6 20px,#7aa4e6 26px,#7890d4 27px,#7890d4 28px)"></div>
<div class="t" style="left:676px;top:66px;font-weight:bold;font-size:12.5px;line-height:13px;color:#dce6fa">Solid View Controls</div>
<div class="a" style="left:997px;top:62px;width:20px;height:20px;border:1px solid #e6c4d0;border-radius:3px;background:linear-gradient(135deg,#c87888,#b45a6c)"><svg width="18" height="18" style="position:absolute;left:0;top:0"><path d="M4.5 4.5 L13.5 13.5 M13.5 4.5 L4.5 13.5" stroke="#fff" stroke-width="2"/></svg></div>
<div class="a" style="left:672px;top:85px;width:347px;height:37px;background:#ece9d8;border-top:1px solid #f8f8f8"></div>
<div class="t" style="left:687px;top:86px;font-size:11px;line-height:12px">Zoom</div>
<div class="t" style="left:686px;top:104px;font-size:11px;line-height:12px">Key Light</div>
<div class="t" style="left:801px;top:104px;font-size:11px;line-height:12px">Fill Light</div>
<div class="t" style="left:900px;top:104px;font-size:11px;line-height:12px">Back Light</div>
<div class="a" style="left:730px;top:89px;width:273px;height:2px;background:linear-gradient(#8a8878,#6f6d60)"></div>
<div class="a" style="left:730px;top:91px;width:274px;height:2px;background:#fff"></div>
<div class="a" style="left:1003px;top:89px;width:1px;height:3px;background:#fff"></div>
<div class="a" style="left:988px;top:87px;width:5px;height:9px;background:#ece9d8;border-top:1px solid #fff;border-left:1px solid #fff;border-right:1px solid #716f64;border-bottom:1px solid #716f64"></div>
<div class="a" style="left:739px;top:109px;width:44px;height:2px;background:linear-gradient(#8a8878,#6f6d60)"></div>
<div class="a" style="left:739px;top:111px;width:45px;height:2px;background:#fff"></div>
<div class="a" style="left:783px;top:109px;width:1px;height:3px;background:#fff"></div>
<div class="a" style="left:778px;top:107px;width:5px;height:9px;background:#ece9d8;border-top:1px solid #fff;border-left:1px solid #fff;border-right:1px solid #716f64;border-bottom:1px solid #716f64"></div>
<div class="a" style="left:845px;top:109px;width:43px;height:2px;background:linear-gradient(#8a8878,#6f6d60)"></div>
<div class="a" style="left:845px;top:111px;width:44px;height:2px;background:#fff"></div>
<div class="a" style="left:888px;top:109px;width:1px;height:3px;background:#fff"></div>
<div class="a" style="left:857px;top:107px;width:5px;height:9px;background:#ece9d8;border-top:1px solid #fff;border-left:1px solid #fff;border-right:1px solid #716f64;border-bottom:1px solid #716f64"></div>
<div class="a" style="left:960px;top:109px;width:43px;height:2px;background:linear-gradient(#8a8878,#6f6d60)"></div>
<div class="a" style="left:960px;top:111px;width:44px;height:2px;background:#fff"></div>
<div class="a" style="left:1003px;top:109px;width:1px;height:3px;background:#fff"></div>
<div class="a" style="left:998px;top:107px;width:5px;height:9px;background:#ece9d8;border-top:1px solid #fff;border-left:1px solid #fff;border-right:1px solid #716f64;border-bottom:1px solid #716f64"></div>
<svg class="a" style="left:921px;top:38px" width="36" height="36"><rect x="0" y="0" width="36" height="36" fill="#1c1c48"/><rect x="1" y="1" width="34" height="17" fill="#4b4aa6"/><rect x="1" y="18" width="34" height="17" fill="#2a29a0"/><path d="M1 22 L8 22 L9 21 L11 22 L13 21.5 L14 20.5 L15 21 L17 20 L19 21.5 L21 23 L24 25 L27 27 L29 28 L31 27 L32 26 L33 27 L34 25 L35 24 L35 35 L1 35Z" fill="#3ccce0"/><path d="M1 29 L2 27 L3 28 L4 26 L5 29 L7 28 L8 25 L9 29 L11 28 L12 26 L13 30 L14 31 L15 29 L16 27 L17 28 L18 30 L19 29 L20 27 L22 28 L24 29 L27 30 L29 29 L31 28 L33 28 L34 27 L35 27 L35 35 L1 35Z" fill="#c8d048"/><rect x="30" y="24" width="1" height="4" fill="#b8f0ff"/></svg>
<div class="t" style="left:927px;top:40px;font-size:10px;line-height:10px;color:#80dcff;-webkit-text-stroke-width:0">&#8595;54kB</div></body></html>
